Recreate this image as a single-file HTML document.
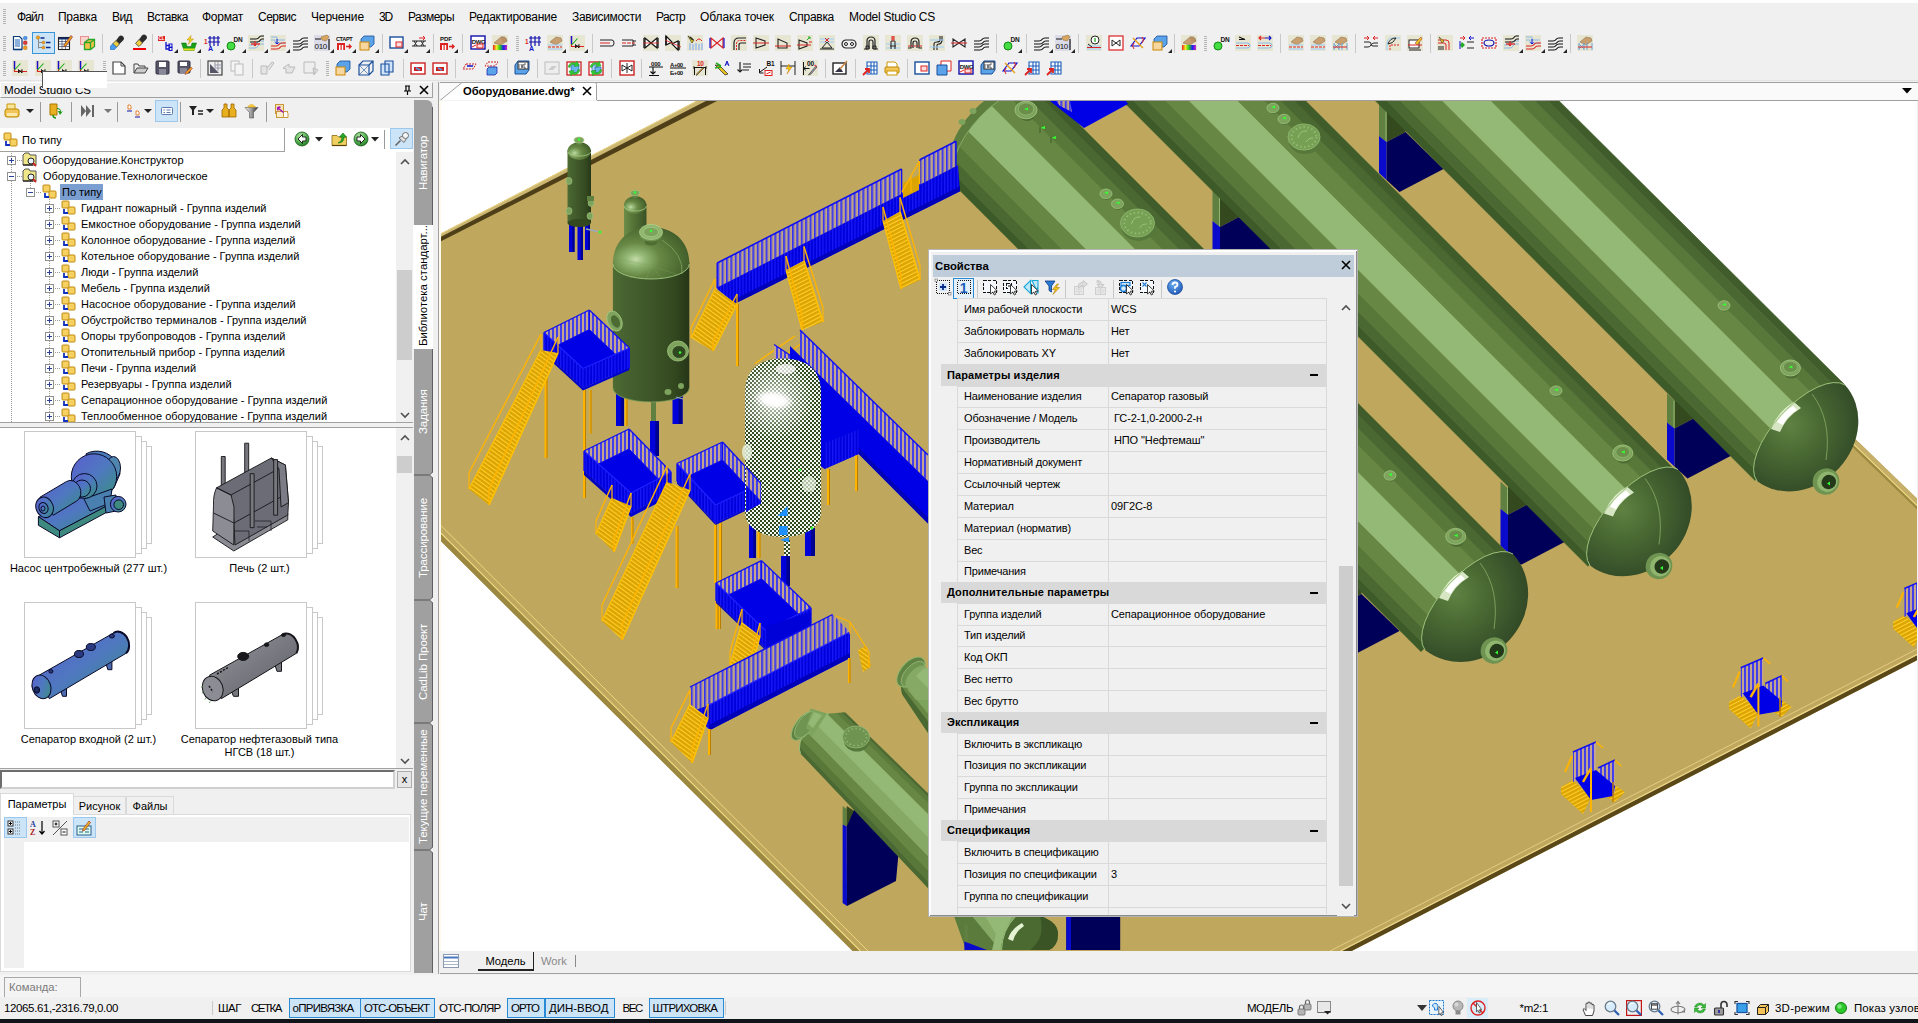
<!DOCTYPE html>
<html lang="ru"><head><meta charset="utf-8"><title>Model Studio CS</title>
<style>

*{box-sizing:border-box}
html,body{margin:0;padding:0}
body{width:1918px;height:1023px;overflow:hidden;background:#f0f0f0;position:relative;font-family:"Liberation Sans",sans-serif;font-size:11px;color:#000}
.a{position:absolute}
.ic{position:absolute;overflow:visible}
.menu span{position:absolute;top:10px;font-size:12px;white-space:nowrap;line-height:14px}
.sep{position:absolute;width:1px;background:#c8c8c8}
.grip{position:absolute;width:3px;background:repeating-linear-gradient(#f0f0f0 0 1px,#b4b4b4 1px 2px)}
.sel{position:absolute;background:#cce4f7;border:1px solid #3a94d8}
.tree div{position:absolute;white-space:nowrap;font-size:11px;line-height:16px;height:16px}
.pm{position:absolute;width:9px;height:9px;border:1px solid #919191;background:#fff}
.pm:before{content:"";position:absolute;left:1px;top:3px;width:5px;height:1px;background:#2a3e9c}
.pm.p:after{content:"";position:absolute;left:3px;top:1px;width:1px;height:5px;background:#2a3e9c}
.vt{position:absolute;left:413px;width:20px;color:#fff}
.vt span{position:absolute;left:2px;top:0;width:16px;height:100%;writing-mode:vertical-rl;transform:rotate(180deg);text-align:center;white-space:nowrap;font-size:11.5px;line-height:16px;letter-spacing:-.1px}
.vt.act{background:#fff;color:#000;width:21px}
.vt.act span{text-align:left;padding-top:3px;font-size:11.4px;letter-spacing:0}
.th{position:absolute;width:112px;height:127px;border:1px solid #c8c8c8;background:#fff}
.thl{position:absolute;font-size:11px;text-align:center;line-height:13px;white-space:nowrap}
.sb span{position:absolute;top:1001px;font-size:11.5px;line-height:14px;white-space:nowrap}
.sbon{position:absolute;top:998px;height:20px;background:#cce4f7;border:1px solid #2a8ad4}

.pp{position:absolute;left:928px;top:249px;width:430px;height:668px;background:#f0f0f0;border:1px solid #b4b4b4;box-shadow:inset 1px 1px 0 #fff,inset -1px -1px 0 #8a8a8a, inset 2px 2px 0 #fff}
.pp .t{position:absolute;left:4px;top:5px;width:421px;height:22px;background:#bfcddb}
.pp .t b{position:absolute;left:2px;top:4px;font-size:11.3px;line-height:14px}
.pr{position:absolute;left:28px;width:370px;border-top:1px solid #d9d9d9;height:23px}
.pr i{position:absolute;left:0;top:0;width:152px;height:22px;border-left:1px solid #d9d9d9;border-right:1px solid #d9d9d9;font-style:normal;padding-left:6px;line-height:22px;white-space:nowrap;overflow:hidden;font-size:11px;letter-spacing:-.17px}
.pr u{position:absolute;left:152px;top:0;width:218px;height:22px;border-right:1px solid #d9d9d9;text-decoration:none;padding-left:2px;line-height:22px;white-space:nowrap;font-size:11px;letter-spacing:-.1px}
.ph{position:absolute;left:12px;width:386px;height:22px;background:#d9d9d9;font-weight:bold;padding-left:6px;line-height:22px;font-size:11px;letter-spacing:.1px}
.ph:after{content:"";position:absolute;right:9px;top:10px;width:8px;height:2px;background:#000}

</style></head><body>
<svg width="0" height="0" style="position:absolute"><defs><linearGradient id="rb" x1="0" x2="1" y1="0" y2="0"><stop offset="0" stop-color="#e22"/><stop offset=".25" stop-color="#ee2"/><stop offset=".5" stop-color="#2c2"/><stop offset=".75" stop-color="#22e"/><stop offset="1" stop-color="#c2c"/></linearGradient></defs></svg>
<div class="a" style="left:0;top:0;width:1918px;height:3px;background:#fff"></div>
<div class="grip" style="left:3px;top:8px;height:17px"></div>
<div class="menu">
<span style="left:17px;letter-spacing:-0.879px">Файл</span>
<span style="left:58px;letter-spacing:-0.258px">Правка</span>
<span style="left:112px;letter-spacing:-0.573px">Вид</span>
<span style="left:147px;letter-spacing:-0.516px">Вставка</span>
<span style="left:202px;letter-spacing:-0.273px">Формат</span>
<span style="left:258px;letter-spacing:-0.516px">Сервис</span>
<span style="left:311px;letter-spacing:-0.127px">Черчение</span>
<span style="left:379px;letter-spacing:-1.172px">3D</span>
<span style="left:408px;letter-spacing:-0.554px">Размеры</span>
<span style="left:469px;letter-spacing:-0.244px">Редактирование</span>
<span style="left:572px;letter-spacing:-0.348px">Зависимости</span>
<span style="left:656px;letter-spacing:-0.691px">Растр</span>
<span style="left:700px;letter-spacing:-0.068px">Облака точек</span>
<span style="left:789px;letter-spacing:-0.297px">Справка</span>
<span style="left:849px;letter-spacing:-0.27px">Model Studio CS</span>
</div>
<div class="grip" style="left:3px;top:35px;height:17px"></div>
<div class="sel" style="left:32px;top:32px;width:23px;height:22px"></div>
<svg class="ic" style="left:12px;top:35px" width="16" height="16" viewBox="0 0 16 16" ><path d="M1.500 1.500h6l2.500 2.500v10.500h-8.500z" fill="#fff" stroke="#0a3a7a" stroke-width="1.200"/><path d="M3 5h5M3 7h5M3 9h5M3 11h5" stroke="#1a5fb8" stroke-width="1"/><path d="M1.500 14.500h8.500" stroke="#0a3a7a" stroke-width="1.600"/><rect x="11.500" y="1.500" width="3.500" height="3" rx="1" fill="#4a9af0" stroke="#1a5fb8" stroke-width=".5"/><rect x="11.500" y="6" width="3.500" height="3.500" rx="1" fill="#e03a3a" stroke="#a01818" stroke-width=".5"/><rect x="11.500" y="11" width="3.500" height="3.500" rx="1" fill="#f0a020" stroke="#b07010" stroke-width=".5"/><path d="M13.200 4.500v1.500M13.200 9.500v1.500" stroke="#888" stroke-dasharray="1 .5"/></svg>
<svg class="ic" style="left:35px;top:35px" width="16" height="16" viewBox="0 0 16 16" ><path d="M3.500 4v9.500M3.500 7.500h4M3.500 12.500h4" stroke="#8a8a8a" fill="none"/><circle cx="3" cy="2.500" r="1.700" fill="#f0a020" stroke="#b07010" stroke-width=".5"/><circle cx="8.500" cy="7.500" r="1.500" fill="#f0a020" stroke="#b07010" stroke-width=".5"/><circle cx="8.500" cy="12.500" r="1.500" fill="#f0a020" stroke="#b07010" stroke-width=".5"/><path d="M5.500 3h4M11 7.500h4.500M11 12.500h4.500" stroke="#0a2a8a" stroke-width="1.600"/></svg>
<svg class="ic" style="left:57px;top:35px" width="16" height="16" viewBox="0 0 16 16" ><rect x="1.500" y="2.500" width="11" height="12" fill="#fff" stroke="#222" stroke-width="1.100"/><path d="M2 3.500h10" stroke="#0a2a6a" stroke-width="2"/><path d="M2 6.500h10M2 9h10M2 11.500h10M5 4v10M8.500 4v10" stroke="#4a5a7a" stroke-width=".8"/><path d="M14 .5l1.500 1.500-6.500 9-2.200 1 .3-2.300z" fill="#f0a820" stroke="#8a2a2a" stroke-width=".7"/></svg>
<svg class="ic" style="left:79px;top:35px" width="16" height="16" viewBox="0 0 16 16" ><rect x="1.500" y="1.500" width="8" height="8" fill="#f8d4cc" stroke="#e89090"/><path d="M5.500 7.500l4-3h6v7l-4 3h-6z" fill="#f4c048" stroke="#28a828" stroke-width="1.300"/><path d="M5.500 7.500h6v7M11.500 7.500l4-3" stroke="#28a828" fill="none" stroke-width="1.300"/></svg>
<div class="sep" style="left:102px;top:34px;height:19px"></div>
<svg class="ic" style="left:109px;top:35px" width="16" height="16" viewBox="0 0 16 16" ><path d="M10 1.500q2-2 4 0t0 4l-3.500 3.500-3.500-3.500z" fill="#2a2a2a"/><path d="M7 5.500l3.500 3.500-3 3.200-3.700-3.400z" fill="#f0d040" stroke="#2a2a2a" stroke-width=".7"/><path d="M3.800 8.800l3.700 3.400-2 2.300H1.500v-3.500z" fill="#4aa0f0" stroke="#1a5fb8" stroke-width=".6"/></svg>
<svg class="ic" style="left:132px;top:35px" width="16" height="16" viewBox="0 0 16 16" ><path d="M10 .5q2-2 4 0t0 4l-3.500 3.500-3.500-3.500z" fill="#2a2a2a"/><path d="M7 4.500l3.500 3.500-3.500 3.500-3.500-3z" fill="#f0d040" stroke="#2a2a2a" stroke-width=".7"/><path d="M1 14h13" stroke="#e00" stroke-width="2"/></svg>
<div class="sep" style="left:152px;top:34px;height:19px"></div>
<svg class="ic" style="left:157px;top:35px" width="16" height="16" viewBox="0 0 16 16" ><rect x="1" y="1" width="7" height="5" fill="#d22"/><text x="1.6" y="5.2" font-size="4.5" font-family="Liberation Sans,sans-serif" font-weight="bold" fill="#fff" letter-spacing="0">CL</text><path d="M9 7v7h4M9 10.500h4" stroke="#11c" fill="none" stroke-width="1.300"/><rect x="12" y="9" width="3" height="3" fill="none" stroke="#11c"/><rect x="12" y="12.500" width="3" height="3" fill="none" stroke="#11c"/></svg>
<svg class="ic" style="left:181px;top:35px" width="16" height="16" viewBox="0 0 16 16" ><path d="M.5 8h4.500l1 3.500h4l1-3.500h4.500l-2.500 7.500h-10z" fill="#18a018" stroke="#0a6a0a" stroke-width=".5"/><path d="M2 13.500h12l-.7 2H2.700z" fill="#e8e020"/><path d="M10 .5L6 5h3L7 9.500l5.500-5.500h-3z" fill="#f8d820" stroke="#b08000" stroke-width=".5"/></svg>
<svg class="ic" style="left:204px;top:35px" width="16" height="16" viewBox="0 0 16 16" ><path d="M6 1v10M10 1v10M14 1v10M4 3h12M4 7h12" stroke="#11a" fill="none" stroke-width="1.200"/><text x="0" y="9" font-size="6.5" font-family="Liberation Sans,sans-serif" font-weight="bold" fill="#d22" letter-spacing="0">1</text><text x="4" y="16" font-size="7" font-family="Liberation Sans,sans-serif" font-weight="bold" fill="#11c" letter-spacing="0">A</text></svg>
<svg class="ic" style="left:226px;top:35px" width="16" height="16" viewBox="0 0 16 16" ><circle cx="5" cy="11" r="4" fill="#4d4" stroke="#181"/><text x="7.5" y="6.5" font-size="6.5" font-family="Liberation Sans,sans-serif" font-weight="bold" fill="#111" letter-spacing="-0.3">DN</text></svg>
<svg class="ic" style="left:248px;top:35px" width="16" height="16" viewBox="0 0 16 16" ><rect width="16" height="16" fill="#e6e6d2"/><path d="M1 10h5q2 0 3-2t3-2h4M1 13h6q2 0 3-2t3-2h3" stroke="#8ab8e8" fill="none"/><path d="M2 4h6q2 0 3-1.500T13 1h3M2 7h7q2 0 3-1.500T14 4h2" stroke="#111" fill="none" stroke-width="1.200"/><path d="M3 9h9" stroke="#d22" stroke-width="1.300"/><path d="M7 6v5M5.500 9.500L7 11l1.500-1.500" stroke="#d22" fill="none"/></svg>
<svg class="ic" style="left:270px;top:35px" width="16" height="16" viewBox="0 0 16 16" ><rect width="16" height="16" fill="#e6e6d2"/><path d="M1 2h6v3h8M1 5h4v3h10" stroke="#8ab8e8" fill="none"/><path d="M1 11h5q2 0 3-1.500T12 8h4M1 14h6q2 0 3-1.500T13 11h3" stroke="#d22" fill="none" stroke-width="1.200"/><path d="M7 4v5M5.500 7.500L7 9l1.500-1.500" stroke="#11c" fill="none"/></svg>
<svg class="ic" style="left:292px;top:35px" width="16" height="16" viewBox="0 0 16 16" ><path d="M1 6h5q2 0 3-1.500T12 3h4M1 9h6q2 0 3-1.500T13 6h3M1 12h5q2 0 3-1.500T12 9h4M1 15h6q2 0 3-1.500T13 12h3" stroke="#111" fill="none" stroke-width="1.200"/></svg>
<svg class="ic" style="left:314px;top:35px" width="16" height="16" viewBox="0 0 16 16" ><rect width="16" height="16" fill="#dcdce8"/><text x="0.5" y="14" font-size="8" font-family="Liberation Sans,sans-serif" font-weight="normal" fill="#111" letter-spacing="-0.3">010</text><path d="M15 4v11" stroke="#111" stroke-width="1.200"/><path d="M1 4h6" stroke="#111"/><path d="M7 2l6-2 2 2-3 4-4-1z" fill="#d9a760" stroke="#863" stroke-width=".5"/></svg>
<svg class="ic" style="left:336px;top:35px" width="16" height="16" viewBox="0 0 16 16" ><text x="0" y="6" font-size="5.6" font-family="Liberation Sans,sans-serif" font-weight="bold" fill="#111" letter-spacing="-0.35">СТАРТ</text><path d="M1 8h8v7H1z" fill="#d22"/><path d="M3 10h1.500v5H3zM5.700 10h1.500v5H5.700z" fill="#fff"/><path d="M10 11.500h5M13 9.500l2 2-2 2" stroke="#d22" fill="none" stroke-width="1.400"/></svg>
<svg class="ic" style="left:359px;top:35px" width="16" height="16" viewBox="0 0 16 16" ><path d="M5 1h10v8l-3 3H2V4z" fill="#5aa3e8" stroke="#1a4f9c" stroke-width=".8"/><rect x="1" y="7" width="9" height="8" fill="#f6d7a0" stroke="#c80"/></svg>
<div class="sep" style="left:382px;top:34px;height:19px"></div>
<svg class="ic" style="left:389px;top:35px" width="16" height="16" viewBox="0 0 16 16" ><rect x="1" y="2" width="13" height="11" fill="#fff" stroke="#1a4f9c" stroke-width="1.4"/><rect x="7" y="7" width="6" height="5" fill="#fdd" stroke="#d22"/></svg>
<svg class="ic" style="left:411px;top:35px" width="16" height="16" viewBox="0 0 16 16" ><path d="M1 6h14M1 11h14" stroke="#222" /><path d="M3 6l3 5M6 6l-3 5M10 6l3 5M13 6l-3 5" stroke="#222" fill="none"/><path d="M8 3h6M12 1l2 2-2 2" stroke="#d22" fill="none"/></svg>
<div class="sep" style="left:433px;top:34px;height:19px"></div>
<svg class="ic" style="left:439px;top:35px" width="16" height="16" viewBox="0 0 16 16" ><text x="1" y="6" font-size="6" font-family="Liberation Sans,sans-serif" font-weight="bold" fill="#111" letter-spacing="0">PDF</text><path d="M1 8h8v7H1z" fill="#d22"/><path d="M3 10h1.500v5H3zM5.700 10h1.500v5H5.700z" fill="#fff"/><path d="M10 11.500h5M13 9.500l2 2-2 2" stroke="#d22" fill="none" stroke-width="1.400"/></svg>
<div class="sep" style="left:462px;top:34px;height:19px"></div>
<svg class="ic" style="left:470px;top:35px" width="16" height="16" viewBox="0 0 16 16" ><rect x="1" y="1" width="14" height="13" fill="#fff" stroke="#11a" stroke-width="1.400"/><text x="1.8" y="8.5" font-size="6" font-family="Liberation Sans,sans-serif" font-weight="bold" fill="#111" letter-spacing="-0.4">DWG</text><rect x="7" y="9" width="6" height="4" fill="#fdd" stroke="#d22"/><path d="M2 12l4-2" stroke="#d22"/></svg>
<svg class="ic" style="left:492px;top:35px" width="16" height="16" viewBox="0 0 16 16" ><rect width="16" height="16" fill="#e6e6d2"/><path d="M2 8l7-6 5 1 1 3-6 4z" fill="#c8a070" stroke="#864" stroke-width=".5"/><path d="M9 2l4 0M9 4l5 0M10 6l5 0" stroke="#a07850" stroke-width=".7"/><rect x="1" y="10" width="14" height="5" fill="url(#rb)"/></svg>
<div class="grip" style="left:516px;top:35px;height:17px"></div>
<svg class="ic" style="left:525px;top:35px" width="16" height="16" viewBox="0 0 16 16" ><path d="M6 1v10M10 1v10M14 1v10M4 3h12M4 7h12" stroke="#11a" fill="none" stroke-width="1.200"/><text x="0" y="9" font-size="6.5" font-family="Liberation Sans,sans-serif" font-weight="bold" fill="#d22" letter-spacing="0">1</text><text x="4" y="16" font-size="7" font-family="Liberation Sans,sans-serif" font-weight="bold" fill="#11c" letter-spacing="0">A</text></svg>
<svg class="ic" style="left:547px;top:35px" width="16" height="16" viewBox="0 0 16 16" ><rect width="16" height="16" fill="#e6e6d2"/><path d="M3 7l6-5 5 1 1 3-6 4z" fill="#c8a070" stroke="#864" stroke-width=".5"/><path d="M1 10h14M1 14h14" stroke="#9cf"/><path d="M1 12h14" stroke="#d22" stroke-dasharray="3 1"/></svg>
<svg class="ic" style="left:569px;top:35px" width="16" height="16" viewBox="0 0 16 16" ><rect width="16" height="16" fill="#e6e6d2"/><path d="M2.500 1v10.500H15" stroke="#d22" fill="none" stroke-width="1.200"/><path d="M2.500 1v8" stroke="#11c" stroke-width="1.400"/><path d="M2.500 10l6-6.500" stroke="#1a1" stroke-width="1.100"/><path d="M6.500 9.500l3.500 3.500M10 9.500l-3.500 3.500M6.500 9.500v3.500M10 9.500v3.500" stroke="#111" fill="none" stroke-width=".9"/></svg>
<div class="sep" style="left:592px;top:34px;height:19px"></div>
<svg class="ic" style="left:599px;top:35px" width="16" height="16" viewBox="0 0 16 16" ><path d="M1 5h12q2 0 2 3t-2 3H1" stroke="#222" fill="none"/><path d="M1 8h10" stroke="#d22"/></svg>
<svg class="ic" style="left:621px;top:35px" width="16" height="16" viewBox="0 0 16 16" ><path d="M1 5h11v6H1M12 6h3M12 10h3" stroke="#222" fill="none"/><path d="M1 8h13" stroke="#d22" stroke-dasharray="4 1"/></svg>
<svg class="ic" style="left:643px;top:35px" width="16" height="16" viewBox="0 0 16 16" ><rect width="16" height="16" fill="#e6e6d2"/><path d="M2 3v10l6-5zM14 3v10L8 8z" fill="#fff" stroke="#111" stroke-width="1.200"/><path d="M1 3v10M15 3v10" stroke="#111" stroke-width="1.200"/><path d="M0 8h16" stroke="#d22" stroke-width=".8"/></svg>
<svg class="ic" style="left:665px;top:35px" width="16" height="16" viewBox="0 0 16 16" ><rect width="16" height="16" fill="#e6e6d2"/><path d="M1 1v9l6-3zM13 6v9L7 9z" fill="#fff" stroke="#111" stroke-width="1.200"/><path d="M14 6v9M1 1v9" stroke="#111" stroke-width="1.400"/><path d="M0 5l16 7" stroke="#d22" stroke-width=".8"/></svg>
<svg class="ic" style="left:687px;top:35px" width="16" height="16" viewBox="0 0 16 16" ><rect width="16" height="16" fill="#e6e6d2"/><path d="M3 8v7M6 9v6M9 8v7M12 9v6M15 8v7" stroke="#8ab0f0" stroke-width="1.200"/><path d="M1 1l6 4-2 3z" fill="#e8d020" stroke="#222" stroke-width=".6"/><path d="M3 2l3 3" stroke="#222" stroke-width="1.500"/><path d="M9 6q3-4 6 0" stroke="#d22" fill="none"/></svg>
<svg class="ic" style="left:709px;top:35px" width="16" height="16" viewBox="0 0 16 16" ><path d="M2 3v10l6-5zM14 3v10L8 8z" fill="none" stroke="#d22" stroke-width="1.2"/><path d="M1 3v10M15 3v10" stroke="#11c" stroke-width="1.2"/></svg>
<svg class="ic" style="left:731px;top:35px" width="16" height="16" viewBox="0 0 16 16" ><rect width="16" height="16" fill="#e6e6d2"/><path d="M3 15V8q0-5 5-5h7M8 15V10q0-2 2-2h5" stroke="#222" fill="none" stroke-width="1.2"/><path d="M5.500 15V9q0-3.500 3.500-3.500h6" stroke="#d22" fill="none" stroke-dasharray="2 1"/></svg>
<svg class="ic" style="left:753px;top:35px" width="16" height="16" viewBox="0 0 16 16" ><rect width="16" height="16" fill="#e6e6d2"/><path d="M3 3v10l9-3V6z" fill="none" stroke="#222" stroke-width="1.1"/><path d="M0 8h16" stroke="#d22"/></svg>
<svg class="ic" style="left:775px;top:35px" width="16" height="16" viewBox="0 0 16 16" ><rect width="16" height="16" fill="#e6e6d2"/><path d="M3 4v9h9V8z" fill="none" stroke="#222" stroke-width="1.1"/><path d="M0 11h16" stroke="#d22"/></svg>
<svg class="ic" style="left:797px;top:35px" width="16" height="16" viewBox="0 0 16 16" ><rect width="16" height="16" fill="#e6e6d2"/><path d="M2 5v9l8-3V8z" fill="none" stroke="#222" stroke-width="1.1"/><path d="M0 10h14" stroke="#d22"/><path d="M10 5l3-3M11 2h2v2" stroke="#2a2" fill="none"/><path d="M12 7h3" stroke="#d22"/></svg>
<svg class="ic" style="left:819px;top:35px" width="16" height="16" viewBox="0 0 16 16" ><rect width="16" height="16" fill="#e6e6d2"/><path d="M1 4h14M1 7h14" stroke="#9cf"/><path d="M8 7l-5 6h10zM1 14h14" stroke="#222" fill="none"/><path d="M6 3l4 4M10 3L6 7" stroke="#d22"/></svg>
<svg class="ic" style="left:841px;top:35px" width="16" height="16" viewBox="0 0 16 16" ><rect x="1" y="5" width="14" height="8" rx="4" fill="none" stroke="#222" stroke-width="1.2"/><circle cx="5" cy="9" r="1.500" fill="none" stroke="#222"/><circle cx="11" cy="9" r="1.500" fill="none" stroke="#222"/></svg>
<svg class="ic" style="left:863px;top:35px" width="16" height="16" viewBox="0 0 16 16" ><rect width="16" height="16" fill="#e6e6d2"/><path d="M1 14h3V6q0-4 4-4t4 4v8h3M6 14V7q0-2 2-2t2 2v7" stroke="#222" fill="none" stroke-width="1.2"/><path d="M3 11h3v3H3zM10 11h3v3h-3z" fill="none" stroke="#222"/></svg>
<svg class="ic" style="left:885px;top:35px" width="16" height="16" viewBox="0 0 16 16" ><rect width="16" height="16" fill="#e6e6d2"/><path d="M1 9h14M1 13h14" stroke="#9cf"/><path d="M6 14V6h4v8M5 11h6" stroke="#222" fill="none"/><path d="M6 2h4M8 1v5M6 4h4" stroke="#d22"/></svg>
<svg class="ic" style="left:907px;top:35px" width="16" height="16" viewBox="0 0 16 16" ><rect width="16" height="16" fill="#e6e6d2"/><path d="M1 13h3V7q0-4 4-4t4 4v6h3M6 13V8q0-2 2-2t2 2v5" stroke="#222" fill="none" stroke-width="1.2"/><path d="M1 11h14" stroke="#d22" stroke-dasharray="2 1"/></svg>
<svg class="ic" style="left:929px;top:35px" width="16" height="16" viewBox="0 0 16 16" ><rect width="16" height="16" fill="#e6e6d2"/><path d="M5 15V9q0-2 3-2t3-2V1M8 15V10q0-1 2-1t3-3V1" stroke="#222" fill="none" stroke-width="1.1"/><path d="M1 5h14M1 12h14" stroke="#9cf"/></svg>
<svg class="ic" style="left:951px;top:35px" width="16" height="16" viewBox="0 0 16 16" ><path d="M2 4v8l6-4zM14 4v8L8 8z" fill="none" stroke="#222" stroke-width="1.1"/><path d="M0 8h16" stroke="#d22"/></svg>
<svg class="ic" style="left:973px;top:35px" width="16" height="16" viewBox="0 0 16 16" ><path d="M1 6h5q2 0 3-1.500T12 3h4M1 9h6q2 0 3-1.500T13 6h3M1 12h5q2 0 3-1.500T12 9h4M1 15h6q2 0 3-1.500T13 12h3" stroke="#111" fill="none" stroke-width="1.200"/></svg>
<div class="sep" style="left:996px;top:34px;height:19px"></div>
<svg class="ic" style="left:1003px;top:35px" width="16" height="16" viewBox="0 0 16 16" ><circle cx="5" cy="11" r="4" fill="#4d4" stroke="#181"/><text x="7.5" y="6.5" font-size="6.5" font-family="Liberation Sans,sans-serif" font-weight="bold" fill="#111" letter-spacing="-0.3">DN</text></svg>
<div class="sep" style="left:1026px;top:34px;height:19px"></div>
<svg class="ic" style="left:1033px;top:35px" width="16" height="16" viewBox="0 0 16 16" ><path d="M1 6h5q2 0 3-1.500T12 3h4M1 9h6q2 0 3-1.500T13 6h3M1 12h5q2 0 3-1.500T12 9h4M1 15h6q2 0 3-1.500T13 12h3" stroke="#111" fill="none" stroke-width="1.200"/></svg>
<svg class="ic" style="left:1055px;top:35px" width="16" height="16" viewBox="0 0 16 16" ><rect width="16" height="16" fill="#dcdce8"/><text x="0.5" y="14" font-size="8" font-family="Liberation Sans,sans-serif" font-weight="normal" fill="#111" letter-spacing="-0.3">010</text><path d="M15 4v11" stroke="#111" stroke-width="1.200"/><path d="M1 4h6" stroke="#111"/><path d="M7 2l6-2 2 2-3 4-4-1z" fill="#d9a760" stroke="#863" stroke-width=".5"/></svg>
<div class="sep" style="left:1078px;top:34px;height:19px"></div>
<svg class="ic" style="left:1086px;top:35px" width="16" height="16" viewBox="0 0 16 16" ><rect width="16" height="16" fill="#e6e6d2"/><circle cx="9" cy="5" r="4" fill="#fff" stroke="#222"/><path d="M9 3v4" stroke="#2a2" stroke-width="1.3"/><path d="M1 11h14M1 14h14" stroke="#9cf"/><path d="M2 9l4 3" stroke="#222"/><path d="M1 12.500h14" stroke="#d22"/></svg>
<svg class="ic" style="left:1108px;top:35px" width="16" height="16" viewBox="0 0 16 16" ><rect x="1" y="1" width="14" height="14" fill="#fff" stroke="#d22" stroke-width="1.2"/><path d="M4 5v6l4-3zM12 5v6L8 8z" fill="none" stroke="#222"/></svg>
<svg class="ic" style="left:1130px;top:35px" width="16" height="16" viewBox="0 0 16 16" ><path d="M1 11l6-8h8l-6 8z" fill="none" stroke="#11c" stroke-width="1.2"/><path d="M3 3l10 10" stroke="#e8a020" stroke-width="1.5"/><path d="M12 2q3 3 0 6M4 14q-3-3 0-6" stroke="#d22" fill="none"/></svg>
<svg class="ic" style="left:1152px;top:35px" width="16" height="16" viewBox="0 0 16 16" ><path d="M5 1h10v8l-3 3H2V4z" fill="#5aa3e8" stroke="#1a4f9c" stroke-width=".8"/><rect x="1" y="7" width="9" height="8" fill="#f6d7a0" stroke="#c80"/></svg>
<div class="sep" style="left:1174px;top:34px;height:19px"></div>
<svg class="ic" style="left:1181px;top:35px" width="16" height="16" viewBox="0 0 16 16" ><rect width="16" height="16" fill="#e6e6d2"/><path d="M2 8l7-6 5 1 1 3-6 4z" fill="#c8a070" stroke="#864" stroke-width=".5"/><path d="M9 2l4 0M9 4l5 0M10 6l5 0" stroke="#a07850" stroke-width=".7"/><rect x="1" y="10" width="14" height="5" fill="url(#rb)"/></svg>
<div class="grip" style="left:1204px;top:35px;height:17px"></div>
<svg class="ic" style="left:1213px;top:35px" width="16" height="16" viewBox="0 0 16 16" ><circle cx="5" cy="11" r="4" fill="#4d4" stroke="#181"/><text x="7.5" y="6.5" font-size="6.5" font-family="Liberation Sans,sans-serif" font-weight="bold" fill="#111" letter-spacing="-0.3">DN</text></svg>
<svg class="ic" style="left:1235px;top:35px" width="16" height="16" viewBox="0 0 16 16" ><rect width="16" height="16" fill="#e6e6d2"/><path d="M4 2l6 2.500-6 0" stroke="#111" fill="none" stroke-width="1.100"/><path d="M1 8h11q3 0 3 2.500T12 13H1" stroke="#8ab8e8" fill="none"/><path d="M1 10.500h13" stroke="#d22" stroke-dasharray="3 1"/></svg>
<svg class="ic" style="left:1257px;top:35px" width="16" height="16" viewBox="0 0 16 16" ><rect width="16" height="16" fill="#e6e6d2"/><path d="M8 3H2M4 1L2 3l2 2" stroke="#d22" fill="none" stroke-width="1.100"/><path d="M8 3h6M12 1l2 2-2 2" stroke="#11c" fill="none" stroke-width="1.100"/><path d="M1 8h11q3 0 3 2.500T12 13H1" stroke="#8ab8e8" fill="none"/><path d="M1 10.500h13" stroke="#d22" stroke-dasharray="3 1"/></svg>
<div class="sep" style="left:1280px;top:34px;height:19px"></div>
<svg class="ic" style="left:1288px;top:35px" width="16" height="16" viewBox="0 0 16 16" ><rect width="16" height="16" fill="#e6e6d2"/><path d="M3 7l6-5 5 1 1 3-6 4z" fill="#c8a070" stroke="#864" stroke-width=".5"/><path d="M1 10h14M1 14h14" stroke="#9cf"/><path d="M1 12h14" stroke="#d22" stroke-dasharray="3 1"/></svg>
<svg class="ic" style="left:1310px;top:35px" width="16" height="16" viewBox="0 0 16 16" ><rect width="16" height="16" fill="#e6e6d2"/><path d="M3 7l6-5 5 1 1 3-6 4z" fill="#c8a070" stroke="#864" stroke-width=".5"/><path d="M1 10h14M1 14h14" stroke="#9cf"/><path d="M1 12h14" stroke="#d22" stroke-dasharray="3 1"/></svg>
<svg class="ic" style="left:1332px;top:35px" width="16" height="16" viewBox="0 0 16 16" ><rect width="16" height="16" fill="#e6e6d2"/><path d="M3 7l6-5 5 1 1 3-6 4z" fill="#c8a070" stroke="#864" stroke-width=".5"/><path d="M2 8v7M7 8v7M2 9l5 5M7 9l-5 5M10 8v7M15 8v7" stroke="#6ad" fill="none"/><path d="M1 12h14" stroke="#d22"/></svg>
<div class="sep" style="left:1355px;top:34px;height:19px"></div>
<svg class="ic" style="left:1363px;top:35px" width="16" height="16" viewBox="0 0 16 16" ><path d="M1 3h5M4 1l2 2-2 2M15 3h-5M12 1l-2 2 2 2" stroke="#d22" fill="none"/><path d="M1 7h5q2 0 2 2t2 2h5M1 12h4q2 0 3-2t3-2h4" stroke="#222" fill="none"/></svg>
<svg class="ic" style="left:1385px;top:35px" width="16" height="16" viewBox="0 0 16 16" ><rect width="16" height="16" fill="#e6e6d2"/><path d="M2 15V9q0-6 6-6h7" stroke="#9cf" fill="none"/><path d="M3 9q2-6 8-6M3 9q5 0 8-6" stroke="#222" fill="none"/><path d="M5 15V10h10" stroke="#d22" fill="none" stroke-dasharray="2 1"/></svg>
<svg class="ic" style="left:1407px;top:35px" width="16" height="16" viewBox="0 0 16 16" ><rect width="16" height="16" fill="#e6e6d2"/><rect x="2" y="5" width="10" height="8" fill="#fff" stroke="#222"/><path d="M1 10h14" stroke="#d22"/><path d="M8 8l6-6 1 2-5 6z" fill="#e8c020" stroke="#a33" stroke-width=".5"/><path d="M2 15h12" stroke="#222"/></svg>
<div class="sep" style="left:1430px;top:34px;height:19px"></div>
<svg class="ic" style="left:1437px;top:35px" width="16" height="16" viewBox="0 0 16 16" ><rect width="16" height="16" fill="#e6e6d2"/><path d="M1 5h8q3 0 3 3v7M1 8h6q2 0 2 2v5" stroke="#d22" fill="none"/><path d="M2 2l5 4-2 2z" fill="#e8c020" stroke="#222" stroke-width=".5"/><path d="M1 12h6M1 14h6" stroke="#222"/></svg>
<svg class="ic" style="left:1459px;top:35px" width="16" height="16" viewBox="0 0 16 16" ><path d="M1 3h5M4 1l2 2-2 2" stroke="#d22" fill="none"/><path d="M15 3h-5M12 1l-2 2 2 2" stroke="#11c" fill="none"/><path d="M8 7h7M8 13h7" stroke="#222"/><path d="M3 7l3 3-3 3-2-3z" fill="#2a2"/><path d="M1 6v8" stroke="#11c"/></svg>
<svg class="ic" style="left:1481px;top:35px" width="16" height="16" viewBox="0 0 16 16" ><rect x="1" y="3" width="14" height="10" fill="none" stroke="#d22" stroke-dasharray="2 1" stroke-width="1.2"/><ellipse cx="8" cy="8" rx="5" ry="3" fill="none" stroke="#11a" stroke-width="1.2"/></svg>
<svg class="ic" style="left:1503px;top:35px" width="16" height="16" viewBox="0 0 16 16" ><rect width="16" height="16" fill="#e6e6d2"/><path d="M1 10h5q2 0 3-2t3-2h4M1 13h6q2 0 3-2t3-2h3" stroke="#8ab8e8" fill="none"/><path d="M2 4h6q2 0 3-1.500T13 1h3M2 7h7q2 0 3-1.500T14 4h2" stroke="#111" fill="none" stroke-width="1.200"/><path d="M3 9h9" stroke="#d22" stroke-width="1.300"/><path d="M7 6v5M5.500 9.500L7 11l1.500-1.500" stroke="#d22" fill="none"/></svg>
<svg class="ic" style="left:1525px;top:35px" width="16" height="16" viewBox="0 0 16 16" ><rect width="16" height="16" fill="#e6e6d2"/><path d="M1 2h6v3h8M1 5h4v3h10" stroke="#8ab8e8" fill="none"/><path d="M1 11h5q2 0 3-1.500T12 8h4M1 14h6q2 0 3-1.500T13 11h3" stroke="#d22" fill="none" stroke-width="1.200"/><path d="M7 4v5M5.500 7.500L7 9l1.500-1.500" stroke="#11c" fill="none"/></svg>
<svg class="ic" style="left:1547px;top:35px" width="16" height="16" viewBox="0 0 16 16" ><path d="M1 6h5q2 0 3-1.500T12 3h4M1 9h6q2 0 3-1.500T13 6h3M1 12h5q2 0 3-1.500T12 9h4M1 15h6q2 0 3-1.500T13 12h3" stroke="#111" fill="none" stroke-width="1.200"/></svg>
<div class="sep" style="left:1570px;top:34px;height:19px"></div>
<svg class="ic" style="left:1577px;top:35px" width="16" height="16" viewBox="0 0 16 16" ><rect width="16" height="16" fill="#e6e6d2"/><path d="M3 7l6-5 5 1 1 3-6 4z" fill="#c8a070" stroke="#864" stroke-width=".5"/><path d="M2 8v7M7 8v7M2 9l5 5M7 9l-5 5M10 8v7M15 8v7" stroke="#6ad" fill="none"/><path d="M1 12h14" stroke="#d22"/></svg>
<svg class="ic" style="left:174px;top:49px" width="4" height="4"><path d="M4 0v4H0z" fill="#222"/></svg>
<svg class="ic" style="left:197px;top:49px" width="4" height="4"><path d="M4 0v4H0z" fill="#222"/></svg>
<svg class="ic" style="left:220px;top:49px" width="4" height="4"><path d="M4 0v4H0z" fill="#222"/></svg>
<svg class="ic" style="left:242px;top:49px" width="4" height="4"><path d="M4 0v4H0z" fill="#222"/></svg>
<svg class="ic" style="left:264px;top:49px" width="4" height="4"><path d="M4 0v4H0z" fill="#222"/></svg>
<svg class="ic" style="left:286px;top:49px" width="4" height="4"><path d="M4 0v4H0z" fill="#222"/></svg>
<svg class="ic" style="left:330px;top:49px" width="4" height="4"><path d="M4 0v4H0z" fill="#222"/></svg>
<svg class="ic" style="left:352px;top:49px" width="4" height="4"><path d="M4 0v4H0z" fill="#222"/></svg>
<svg class="ic" style="left:375px;top:49px" width="4" height="4"><path d="M4 0v4H0z" fill="#222"/></svg>
<svg class="ic" style="left:404px;top:49px" width="4" height="4"><path d="M4 0v4H0z" fill="#222"/></svg>
<svg class="ic" style="left:426px;top:49px" width="4" height="4"><path d="M4 0v4H0z" fill="#222"/></svg>
<svg class="ic" style="left:454px;top:49px" width="4" height="4"><path d="M4 0v4H0z" fill="#222"/></svg>
<svg class="ic" style="left:485px;top:49px" width="4" height="4"><path d="M4 0v4H0z" fill="#222"/></svg>
<svg class="ic" style="left:562px;top:49px" width="4" height="4"><path d="M4 0v4H0z" fill="#222"/></svg>
<svg class="ic" style="left:584px;top:49px" width="4" height="4"><path d="M4 0v4H0z" fill="#222"/></svg>
<svg class="ic" style="left:1018px;top:49px" width="4" height="4"><path d="M4 0v4H0z" fill="#222"/></svg>
<svg class="ic" style="left:1049px;top:49px" width="4" height="4"><path d="M4 0v4H0z" fill="#222"/></svg>
<svg class="ic" style="left:1071px;top:49px" width="4" height="4"><path d="M4 0v4H0z" fill="#222"/></svg>
<svg class="ic" style="left:1168px;top:49px" width="4" height="4"><path d="M4 0v4H0z" fill="#222"/></svg>
<svg class="ic" style="left:1519px;top:49px" width="4" height="4"><path d="M4 0v4H0z" fill="#222"/></svg>
<svg class="ic" style="left:1541px;top:49px" width="4" height="4"><path d="M4 0v4H0z" fill="#222"/></svg>
<svg class="ic" style="left:1563px;top:49px" width="4" height="4"><path d="M4 0v4H0z" fill="#222"/></svg>
<div class="grip" style="left:3px;top:60px;height:17px"></div>
<div class="grip" style="left:103px;top:60px;height:17px"></div>
<svg class="ic" style="left:12px;top:60px" width="16" height="16" viewBox="0 0 16 16" ><rect width="16" height="16" fill="#e6e6d2"/><path d="M2.500 1v10.500H15" stroke="#d22" fill="none" stroke-width="1.200"/><path d="M2.500 1v8" stroke="#11c" stroke-width="1.400"/><path d="M2.500 10l6-6.500" stroke="#1a1" stroke-width="1.100"/><path d="M6.500 9.500l3.500 3.500M10 9.500l-3.500 3.500M6.500 9.500v3.500M10 9.500v3.500" stroke="#111" fill="none" stroke-width=".9"/></svg>
<svg class="ic" style="left:35px;top:60px" width="16" height="16" viewBox="0 0 16 16" ><rect width="16" height="16" fill="#e6e6d2"/><path d="M2.500 1v10.500H15" stroke="#d22" fill="none" stroke-width="1.200"/><path d="M2.500 1v8" stroke="#11c" stroke-width="1.400"/><path d="M2.500 10l6-6.500" stroke="#1a1" stroke-width="1.100"/><path d="M6.500 9.500l3.500 3.500M10 9.500l-3.500 3.500M6.500 9.500v3.500M10 9.500v3.500" stroke="#111" fill="none" stroke-width=".9"/></svg>
<svg class="ic" style="left:56px;top:60px" width="16" height="16" viewBox="0 0 16 16" ><rect width="16" height="16" fill="#e6e6d2"/><path d="M2.500 1v10.500H15" stroke="#d22" fill="none" stroke-width="1.200"/><path d="M2.500 1v8" stroke="#11c" stroke-width="1.400"/><path d="M2.500 10l6-6.500" stroke="#1a1" stroke-width="1.100"/><path d="M6.500 9.500l3.500 3.500M10 9.500l-3.500 3.500M6.500 9.500v3.500M10 9.500v3.500" stroke="#111" fill="none" stroke-width=".9"/></svg>
<svg class="ic" style="left:78px;top:60px" width="16" height="16" viewBox="0 0 16 16" ><rect width="16" height="16" fill="#e6e6d2"/><path d="M2.500 1v10.500H15" stroke="#d22" fill="none" stroke-width="1.200"/><path d="M2.500 1v8" stroke="#11c" stroke-width="1.400"/><path d="M2.500 10l6-6.500" stroke="#1a1" stroke-width="1.100"/><path d="M6.500 9.500l3.500 3.500M10 9.500l-3.500 3.500M6.500 9.500v3.500M10 9.500v3.500" stroke="#111" fill="none" stroke-width=".9"/></svg>
<svg class="ic" style="left:111px;top:60px" width="16" height="16" viewBox="0 0 16 16" ><path d="M2 2h8l4 4v8H2z" fill="#fff" stroke="#444" stroke-width="1.2"/><path d="M10 2v4h4" fill="none" stroke="#444"/></svg>
<svg class="ic" style="left:133px;top:60px" width="16" height="16" viewBox="0 0 16 16" ><path d="M1 13V4h4l1 2h6v2" fill="#eee" stroke="#444"/><path d="M1 13l3-5h11l-3 5z" fill="#ccc" stroke="#444"/></svg>
<svg class="ic" style="left:155px;top:60px" width="16" height="16" viewBox="0 0 16 16" ><rect x="1" y="1" width="13" height="13" rx="1" fill="#556" stroke="#334"/><rect x="4" y="2" width="7" height="5" fill="#fff"/><rect x="4" y="9" width="7" height="5" fill="#889"/></svg>
<svg class="ic" style="left:177px;top:60px" width="16" height="16" viewBox="0 0 16 16" ><rect x="1" y="1" width="12" height="12" rx="1" fill="#556" stroke="#334"/><rect x="3" y="2" width="7" height="4" fill="#fff"/><rect x="3" y="8" width="7" height="5" fill="#889"/><path d="M14 7l1.500 1.500-5 5-2.500 1 1-2.500z" fill="#e8a020" stroke="#a33" stroke-width=".5"/></svg>
<div class="sep" style="left:200px;top:59px;height:19px"></div>
<svg class="ic" style="left:207px;top:60px" width="16" height="16" viewBox="0 0 16 16" ><rect x="1" y="1" width="14" height="14" fill="#eee" stroke="#444" stroke-width="1.2"/><path d="M3 13V4l9 9z" fill="#556"/><path d="M8 2v6h6M11 2v9M8 5h6" stroke="#99a" fill="none"/></svg>
<svg class="ic" style="left:229px;top:60px" width="16" height="16" viewBox="0 0 16 16" ><rect x="2" y="1" width="8" height="10" fill="#f4f4f4" stroke="#bbb"/><rect x="6" y="4" width="8" height="11" fill="#f4f4f4" stroke="#bbb"/></svg>
<div class="sep" style="left:252px;top:59px;height:19px"></div>
<svg class="ic" style="left:259px;top:60px" width="16" height="16" viewBox="0 0 16 16" ><path d="M2 6h6v8H2zM8 8l5-6 2 1-5 7" fill="#e4e4e4" stroke="#bbb"/></svg>
<svg class="ic" style="left:281px;top:60px" width="16" height="16" viewBox="0 0 16 16" ><path d="M2 8l6-4v3h6l-3 6H5V9z" fill="#e4e4e4" stroke="#bbb"/></svg>
<svg class="ic" style="left:303px;top:60px" width="16" height="16" viewBox="0 0 16 16" ><path d="M1 2h11v11H1zM10 8l5 2-4 5z" fill="#eee" stroke="#bbb"/></svg>
<div class="grip" style="left:326px;top:60px;height:17px"></div>
<svg class="ic" style="left:335px;top:60px" width="16" height="16" viewBox="0 0 16 16" ><path d="M5 1h10v8l-3 3H2V4z" fill="#5aa3e8" stroke="#1a4f9c" stroke-width=".8"/><rect x="1" y="7" width="9" height="8" fill="#f6d7a0" stroke="#c80"/></svg>
<svg class="ic" style="left:358px;top:60px" width="16" height="16" viewBox="0 0 16 16" ><path d="M1 5l4-4h10v10l-4 4H1zM1 5h10v10M11 5l4-4" fill="none" stroke="#1a4f9c" stroke-width="1.2"/><path d="M1 5l10 10M11 5L1 15" stroke="#1a4f9c" stroke-width=".6"/></svg>
<svg class="ic" style="left:380px;top:60px" width="16" height="16" viewBox="0 0 16 16" ><path d="M5 1h8v11H5zM1 4h8v11H1z" fill="#cfe4fa" stroke="#1a4f9c" stroke-width="1.1"/></svg>
<div class="sep" style="left:403px;top:59px;height:19px"></div>
<svg class="ic" style="left:410px;top:60px" width="16" height="16" viewBox="0 0 16 16" ><rect x="1" y="3" width="14" height="11" fill="#fff" stroke="#c22" stroke-width="1.4"/><path d="M4 7h8v4H4z" fill="#c22"/><path d="M6 8l4 2" stroke="#5aa3e8" stroke-width="1.500"/></svg>
<svg class="ic" style="left:432px;top:60px" width="16" height="16" viewBox="0 0 16 16" ><rect x="1" y="3" width="14" height="11" fill="#fff" stroke="#c22" stroke-width="1.4"/><path d="M4 7h8v4H4z" fill="#c22"/><path d="M6 8l4 2" stroke="#5aa3e8" stroke-width="1.500"/></svg>
<div class="sep" style="left:455px;top:59px;height:19px"></div>
<svg class="ic" style="left:462px;top:60px" width="16" height="16" viewBox="0 0 16 16" ><path d="M4 4h10l-3 5H1z" fill="none" stroke="#c22" stroke-dasharray="2 1"/><path d="M5 6h6" stroke="#11c" stroke-width="1.500"/></svg>
<svg class="ic" style="left:484px;top:60px" width="16" height="16" viewBox="0 0 16 16" ><path d="M4 2h10l-3 4H1z" fill="none" stroke="#c22" stroke-dasharray="2 1"/><path d="M5 7h8v6l-2 2H3V9z" fill="#5aa3e8" stroke="#11a" stroke-width=".7"/></svg>
<div class="sep" style="left:507px;top:59px;height:19px"></div>
<svg class="ic" style="left:514px;top:60px" width="16" height="16" viewBox="0 0 16 16" ><path d="M4 1h11v9l-3 4H1V5z" fill="#5aa3e8" stroke="#1a4f9c"/><rect x="4" y="2" width="10" height="7" fill="#fff" stroke="#333"/><path d="M5 4v4M7 4l1 4 1-4M12 4h-2v4h2" stroke="#222" fill="none" stroke-width=".7"/></svg>
<div class="sep" style="left:537px;top:59px;height:19px"></div>
<svg class="ic" style="left:544px;top:60px" width="16" height="16" viewBox="0 0 16 16" ><rect x="1" y="2" width="14" height="12" fill="#eee" stroke="#bbb"/><path d="M4 10l4-4h5l-4 4z" fill="#ccc"/></svg>
<svg class="ic" style="left:566px;top:60px" width="16" height="16" viewBox="0 0 16 16" ><rect x="1" y="2" width="14" height="13" fill="#fff" stroke="#c22" stroke-width="1.300"/><path d="M5 6l3-2h5v6l-3 3H5z" fill="#6ab4f0" stroke="#1a4f9c" stroke-width=".6"/><path d="M2 7q2-6 8-4l1-2 2 5-5 .5 1-2q-4-1-5 3zM14 10q-2 6-8 4l-1 2-2-5 5-.5-1 2q4 1 5-3z" fill="#3c3" stroke="#181" stroke-width=".4"/></svg>
<svg class="ic" style="left:588px;top:60px" width="16" height="16" viewBox="0 0 16 16" ><rect x="1" y="2" width="14" height="13" fill="#fff" stroke="#c22" stroke-width="1.300"/><rect x="4" y="5" width="6" height="6" fill="#a8d4f8" stroke="#1a4f9c" stroke-width=".6"/><rect x="7" y="7" width="6" height="6" fill="#6ab4f0" stroke="#1a4f9c" stroke-width=".6"/><path d="M2 7q2-6 8-4l1-2 2 5-5 .5 1-2q-4-1-5 3zM14 10q-2 6-8 4l-1 2-2-5 5-.5-1 2q4 1 5-3z" fill="#3c3" stroke="#181" stroke-width=".4"/></svg>
<div class="sep" style="left:611px;top:59px;height:19px"></div>
<svg class="ic" style="left:619px;top:60px" width="16" height="16" viewBox="0 0 16 16" ><rect x="1" y="1" width="14" height="14" fill="#fff" stroke="#c22" stroke-width="1.4"/><path d="M3 5v6l5-3zM13 5v6L8 8z" fill="none" stroke="#222"/><path d="M8 3v10" stroke="#222"/></svg>
<div class="sep" style="left:641px;top:59px;height:19px"></div>
<svg class="ic" style="left:648px;top:60px" width="16" height="16" viewBox="0 0 16 16" ><text x="3" y="5.5" font-size="6" font-family="Liberation Sans,sans-serif" font-weight="bold" fill="#111" letter-spacing="-0.2">000</text><path d="M1 7h14" stroke="#111"/><path d="M5 7v7M2.500 11.500L5 14l2.500-2.500M1 15.500h10" stroke="#111" fill="none" stroke-width="1.100"/></svg>
<svg class="ic" style="left:670px;top:60px" width="16" height="16" viewBox="0 0 16 16" ><text x="0" y="6.5" font-size="6" font-family="Liberation Sans,sans-serif" font-weight="bold" fill="#111" letter-spacing="-0.45">А+00</text><path d="M0 8h16" stroke="#111"/><text x="0" y="15" font-size="6" font-family="Liberation Sans,sans-serif" font-weight="bold" fill="#111" letter-spacing="-0.45">Б+00</text></svg>
<svg class="ic" style="left:692px;top:60px" width="16" height="16" viewBox="0 0 16 16" ><rect width="16" height="16" fill="#e6e6d2"/><text x="5" y="6" font-size="6.5" font-family="Liberation Sans,sans-serif" font-weight="bold" fill="#d22" letter-spacing="-0.3">10</text><path d="M1.500 7.500h13M2.500 7.500v7.500M13.500 7.500v7.500" stroke="#111"/><path d="M1.500 6l1 1.500-1 1.500M14.500 6l-1 1.500 1 1.500" stroke="#111" fill="none" stroke-width=".7"/><path d="M12 8l-6 6-1.500 1.500.5-2 6-6z" fill="#f0a820" stroke="#222" stroke-width=".6"/></svg>
<svg class="ic" style="left:714px;top:60px" width="16" height="16" viewBox="0 0 16 16" ><path d="M1 5l5 1 8 8-3 1z" fill="#e8c020" stroke="#222" stroke-width=".7"/><path d="M2 3l5 3M1 8l6-1" stroke="#2a2" stroke-width="1.500"/><path d="M11 6l2-5 2 5M12 4h2" stroke="#11c" fill="none"/></svg>
<svg class="ic" style="left:736px;top:60px" width="16" height="16" viewBox="0 0 16 16" ><path d="M4 2v10M1.500 9.500l2.500 2.500 2.500-2.500M7 4h8M7 7h8M7 10h6" stroke="#222" fill="none" stroke-width="1.200"/></svg>
<svg class="ic" style="left:758px;top:60px" width="16" height="16" viewBox="0 0 16 16" ><text x="8.5" y="6" font-size="6.5" font-family="Liberation Sans,sans-serif" font-weight="bold" fill="#111" letter-spacing="-0.3">B1</text><path d="M2 12l7-5" stroke="#111"/><path d="M1.500 9v4h4" stroke="#111" fill="none"/><rect x="7" y="10.500" width="7" height="5" fill="#fff" stroke="#d22"/><path d="M8.500 14l4-2" stroke="#d22"/></svg>
<svg class="ic" style="left:780px;top:60px" width="16" height="16" viewBox="0 0 16 16" ><path d="M1 1v14M15 1v14M1 6h14" stroke="#222"/><path d="M9 4l-3 5h3l-2 5 5-7H9z" fill="#f4d21a" stroke="#c70" stroke-width=".5"/></svg>
<svg class="ic" style="left:802px;top:60px" width="16" height="16" viewBox="0 0 16 16" ><rect width="16" height="16" fill="#e6e6d2"/><text x="5" y="6" font-size="6.5" font-family="Liberation Sans,sans-serif" font-weight="bold" fill="#111" letter-spacing="-0.2">00</text><path d="M1.500 2v13M1.500 8.500h6" stroke="#111"/><path d="M4 6.500L1.500 8.500 4 10.500" stroke="#111" fill="none" stroke-width=".8"/><path d="M14 6l-6 7-1.500 2 2.500-1 6-7z" fill="#a8a8b8" stroke="#222" stroke-width=".6"/><path d="M12.500 5l2 1.500" stroke="#d44" stroke-width="1.500"/></svg>
<div class="sep" style="left:825px;top:59px;height:19px"></div>
<svg class="ic" style="left:832px;top:60px" width="16" height="16" viewBox="0 0 16 16" ><rect x="1" y="3" width="13" height="11" fill="#fff" stroke="#222" stroke-width="1.400"/><path d="M3 12l5-5 3 5z" fill="#334"/><path d="M15 1l-7 8" stroke="#c84" stroke-width="1.500"/></svg>
<div class="sep" style="left:855px;top:59px;height:19px"></div>
<svg class="ic" style="left:862px;top:60px" width="16" height="16" viewBox="0 0 16 16" ><path d="M5 2h10v12H5zM5 6h10M5 10h10M9 2v12M12 2v12" fill="#fff" stroke="#1a5fbc" stroke-width="1.100"/><path d="M1 15l6-6M3 9h4v4" stroke="#d22" fill="none" stroke-width="1.800"/></svg>
<svg class="ic" style="left:884px;top:60px" width="16" height="16" viewBox="0 0 16 16" ><path d="M3 7V2h8l2 2v3" fill="#fff" stroke="#c90"/><rect x="1" y="7" width="14" height="6" rx="1" fill="#f2c45a" stroke="#b80"/><rect x="3" y="11" width="10" height="4" fill="#fff" stroke="#c90"/></svg>
<div class="sep" style="left:907px;top:59px;height:19px"></div>
<svg class="ic" style="left:914px;top:60px" width="16" height="16" viewBox="0 0 16 16" ><rect x="1" y="2" width="14" height="12" fill="#fff" stroke="#1a4f9c" stroke-width="1.400"/><rect x="7" y="6" width="6" height="5" fill="#fdd" stroke="#d22"/></svg>
<svg class="ic" style="left:936px;top:60px" width="16" height="16" viewBox="0 0 16 16" ><path d="M5 1h10v10H5z" fill="#fff" stroke="#d22"/><path d="M1 5h10v10H1z" fill="#5aa3e8" stroke="#1a4f9c"/></svg>
<svg class="ic" style="left:958px;top:60px" width="16" height="16" viewBox="0 0 16 16" ><rect x="1" y="1" width="14" height="13" fill="#fff" stroke="#11a" stroke-width="1.400"/><text x="1.8" y="8.5" font-size="6" font-family="Liberation Sans,sans-serif" font-weight="bold" fill="#111" letter-spacing="-0.4">DWG</text><rect x="7" y="9" width="6" height="4" fill="#fdd" stroke="#d22"/><path d="M2 12l4-2" stroke="#d22"/></svg>
<svg class="ic" style="left:980px;top:60px" width="16" height="16" viewBox="0 0 16 16" ><path d="M4 1h11v9l-3 4H1V5z" fill="#5aa3e8" stroke="#1a4f9c"/><rect x="4" y="2" width="10" height="7" fill="#fff" stroke="#333"/><path d="M5 4v4M7 4l1 4 1-4M12 4h-2v4h2" stroke="#222" fill="none" stroke-width=".7"/></svg>
<svg class="ic" style="left:1002px;top:60px" width="16" height="16" viewBox="0 0 16 16" ><path d="M1 11l6-8h8l-6 8z" fill="none" stroke="#11c" stroke-width="1.2"/><path d="M3 3l10 10" stroke="#e8a020" stroke-width="1.5"/><path d="M12 2q3 3 0 6M4 14q-3-3 0-6" stroke="#d22" fill="none"/></svg>
<svg class="ic" style="left:1024px;top:60px" width="16" height="16" viewBox="0 0 16 16" ><path d="M5 2h10v12H5zM5 6h10M5 10h10M9 2v12M12 2v12" fill="#fff" stroke="#1a5fbc" stroke-width="1.100"/><path d="M1 15l6-6M3 9h4v4" stroke="#d22" fill="none" stroke-width="1.800"/></svg>
<svg class="ic" style="left:1046px;top:60px" width="16" height="16" viewBox="0 0 16 16" ><path d="M5 2h10v12H5zM5 6h10M5 10h10M9 2v12M12 2v12" fill="#fff" stroke="#1a5fbc" stroke-width="1.100"/><path d="M1 15l6-6M3 9h4v4" stroke="#d22" fill="none" stroke-width="1.800"/></svg>
<div class="a" style="left:0;top:80px;width:1918px;height:1px;background:#e3e3e3"></div>
<div class="a" style="left:0;top:82px;width:433px;height:16px;border:1px solid #a0a0a0;border-top-color:#fff;border-left-color:#fff;background:#f0f0f0"></div>
<div class="a" style="left:4px;top:83px;font-size:11.6px;line-height:14px;white-space:nowrap">Model Studio CS</div>
<svg class="ic" style="left:403px;top:85px" width="9" height="10"><path d="M2 1h5M3 1v5M6 1v5M1 6h7M4.500 6v4" stroke="#000" fill="none" stroke-width="1.2"/></svg>
<svg class="ic" style="left:419px;top:85px" width="10" height="10"><path d="M1 1l8 8M9 1l-8 8" stroke="#000" stroke-width="1.6"/></svg>
<div class="a" style="left:42px;top:71px;width:65px;height:17px;background:#fff;border-left:1px solid #555;border-top:1px solid #555"></div>
<div class="sel" style="left:155px;top:100px;width:23px;height:22px;border-color:#9cc8ee"></div>
<svg class="ic" style="left:4px;top:103px" width="16" height="16" viewBox="0 0 16 16" ><path d="M3 6V1h8v5" fill="#f8e6a0" stroke="#c90"/><rect x="1" y="6" width="14" height="8" rx="2" fill="#f2c45a" stroke="#b80"/><rect x="3" y="10" width="10" height="3" fill="#fbe9a8"/></svg>
<svg class="ic" style="left:26px;top:109px" width="8" height="5"><path d="M0 0h8L4 4z" fill="#222"/></svg>
<div class="sep" style="left:40px;top:102px;height:20px;background:#999"></div>
<svg class="ic" style="left:48px;top:103px" width="16" height="16" viewBox="0 0 16 16" ><path d="M2 1h7v11H2z" fill="#e8b020" stroke="#a70"/><path d="M9 5q4 0 4 4l2-1-3 4-2-4h2q0-2-3-2z" fill="#1a9a1a"/><path d="M8 15q-3 0-3-3" stroke="#1a9a1a" fill="none" stroke-width="1.5"/></svg>
<div class="sep" style="left:71px;top:102px;height:20px;background:#999"></div>
<svg class="ic" style="left:80px;top:103px" width="16" height="16" viewBox="0 0 16 16" ><path d="M1 2l5 6-5 6zM6 2l5 6-5 6z" fill="#666"/><path d="M13 2v12" stroke="#666" stroke-width="2"/></svg>
<svg class="ic" style="left:104px;top:109px" width="8" height="5"><path d="M0 0h8L4 4z" fill="#777"/></svg>
<div class="sep" style="left:117px;top:102px;height:20px;background:#999"></div>
<svg class="ic" style="left:126px;top:103px" width="16" height="16" viewBox="0 0 16 16" ><path d="M2 2h2l1 1v3H2z" fill="#fff" stroke="#d60" stroke-width=".8"/><path d="M1 8h5" stroke="#11a"/><path d="M10 8h2l1 1v3h-3z" fill="#fff" stroke="#d60" stroke-width=".8"/><path d="M9 14h5" stroke="#11a"/></svg>
<svg class="ic" style="left:144px;top:109px" width="8" height="5"><path d="M0 0h8L4 4z" fill="#222"/></svg>
<svg class="ic" style="left:159px;top:103px" width="16" height="16" viewBox="0 0 16 16" ><rect x="2.500" y="4.500" width="11" height="7" rx="1" fill="#fff" stroke="#5a7ab0"/><path d="M4.500 7h1.500M7.500 7h4M4.500 9.500h1.500M7.500 9.500h4" stroke="#5a7ab0"/></svg>
<div class="sep" style="left:180px;top:102px;height:20px;background:#999"></div>
<svg class="ic" style="left:188px;top:103px" width="16" height="16" viewBox="0 0 16 16" ><path d="M1 3h8L6 7v5H4V7z" fill="#222"/><path d="M10 8h5M10 11h5" stroke="#222" stroke-width="1.6"/></svg>
<svg class="ic" style="left:206px;top:109px" width="8" height="5"><path d="M0 0h8L4 4z" fill="#222"/></svg>
<svg class="ic" style="left:221px;top:103px" width="16" height="16" viewBox="0 0 16 16" ><path d="M3 1h3v4l2 2v7H1V7l2-2zM10 1h3v4l2 2v7H8V7l2-2z" fill="#e8b020" stroke="#960" stroke-width=".8"/></svg>
<svg class="ic" style="left:244px;top:103px" width="16" height="16" viewBox="0 0 16 16" ><defs><linearGradient id="fg" x1="0" x2="1"><stop offset="0" stop-color="#f4f4f4"/><stop offset=".5" stop-color="#9a9a9a"/><stop offset="1" stop-color="#2a2a2a"/></linearGradient></defs><path d="M1 4.500h13L9.500 9.500v5.500h-4V9.500z" fill="url(#fg)" stroke="#555" stroke-width=".6"/><path d="M3.500 4q4-5 8 0z" fill="#f8d040" stroke="#e0a010" stroke-width=".6"/></svg>
<div class="sep" style="left:266px;top:102px;height:20px;background:#999"></div>
<svg class="ic" style="left:274px;top:103px" width="16" height="16" viewBox="0 0 16 16" ><rect x="1.500" y="1.500" width="8" height="9" fill="#f8e4b0" stroke="#c89838"/><rect x="2.500" y="8.500" width="11" height="6" fill="#fbeccc" stroke="#c89838"/><path d="M9.500 8.500h3l1.500 1.500v4.500h-4.500z" fill="#fff" stroke="#c89838"/><path d="M3.500 4.500l6 5M3.500 4.500l3-.5M3.500 4.500l.5 3" stroke="#a010c0" fill="none" stroke-width="1.400"/></svg>
<div class="a" style="left:0;top:128px;width:285px;height:24px;background:#fff;border-right:1px solid #a0a0a0;border-bottom:1px solid #a0a0a0"></div>
<svg class="ic" style="left:3px;top:132px" width="16" height="16" viewBox="0 0 16 16" ><rect x="1" y="1" width="7" height="7" rx="1" fill="#f6d060" stroke="#c08a10"/><rect x="7" y="7" width="7" height="7" rx="1" fill="#f6d060" stroke="#c08a10"/><path d="M3 9v4h4" stroke="#1030c0" fill="none" stroke-width="1.800"/></svg>
<div class="a" style="left:22px;top:132px;font-size:11px;line-height:16px">По типу</div>
<div class="a" style="left:285px;top:128px;width:128px;height:24px;background:#fff"></div>
<svg class="ic" style="left:294px;top:131px" width="16" height="16" viewBox="0 0 16 16" ><defs><radialGradient id="ng" cx=".4" cy=".3" r=".8"><stop offset="0" stop-color="#b8e8a8"/><stop offset=".6" stop-color="#4aa84a"/><stop offset="1" stop-color="#1a6a1a"/></radialGradient></defs><circle cx="8" cy="8" r="7" fill="url(#ng)" stroke="#1a5a1a" stroke-width=".8"/><path d="M8.500 3.500L4 8l4.500 4.500V10H12V6H8.500z" fill="#fff" stroke="#111" stroke-width=".9"/></svg>
<svg class="ic" style="left:315px;top:137px" width="8" height="5"><path d="M0 0h8L4 4.500z" fill="#222"/></svg>
<svg class="ic" style="left:331px;top:131px" width="16" height="16" viewBox="0 0 16 16" ><path d="M1 4.500h5l1.500 1.500h8v8.500H1z" fill="#f0d060" stroke="#8a6a10" stroke-width=".8"/><path d="M1 14.500h14.500" stroke="#5a4208" stroke-width="1.200"/><path d="M7 12q4-1 4-6h-2.500L12 2l3.500 4H13q0 6-6 6z" fill="#2aa82a" stroke="#0a6a0a" stroke-width=".6"/></svg>
<svg class="ic" style="left:353px;top:131px" width="16" height="16" viewBox="0 0 16 16" ><defs><radialGradient id="ng" cx=".4" cy=".3" r=".8"><stop offset="0" stop-color="#b8e8a8"/><stop offset=".6" stop-color="#4aa84a"/><stop offset="1" stop-color="#1a6a1a"/></radialGradient></defs><circle cx="8" cy="8" r="7" fill="url(#ng)" stroke="#1a5a1a" stroke-width=".8"/><path d="M7.500 3.500L12 8l-4.500 4.500V10H4V6h3.500z" fill="#fff" stroke="#111" stroke-width=".9"/></svg>
<svg class="ic" style="left:371px;top:137px" width="8" height="5"><path d="M0 0h8L4 4.500z" fill="#222"/></svg>
<div class="sep" style="left:384px;top:130px;height:19px;background:#999"></div>
<div class="sel" style="left:390px;top:128px;width:23px;height:21px;border-color:#9cc8ee"></div>
<svg class="ic" style="left:394px;top:131px" width="16" height="16" viewBox="0 0 16 16" ><path d="M1.500 14.500l5-5" stroke="#666" stroke-width="1.600"/><path d="M5 7l4-2.500 3.500 3L10 11.500z" fill="#e4e4e4" stroke="#555" stroke-width=".8"/><circle cx="11.500" cy="4.500" r="3" fill="#f4f4f4" stroke="#555" stroke-width=".8"/><circle cx="10.800" cy="3.800" r="1" fill="#fff"/></svg>
<div class="a" style="left:0;top:152px;width:396px;height:270px;background:#fff"></div>
<div class="a" style="left:396px;top:152px;width:17px;height:270px;background:#f0f0f0"></div>
<div class="a" style="left:397px;top:270px;width:15px;height:90px;background:#cdcdcd"></div>
<svg class="ic" style="left:400px;top:158px" width="10" height="8"><path d="M1 6l4-4 4 4" stroke="#505050" fill="none" stroke-width="1.600"/></svg>
<svg class="ic" style="left:400px;top:411px" width="10" height="8"><path d="M1 2l4 4 4-4" stroke="#505050" fill="none" stroke-width="1.600"/></svg>
<div class="tree">
<div class="a" style="left:11px;top:152px;width:1px;height:270px;height:270px;background:repeating-linear-gradient(#fff 0 1px,#9a9a9a 1px 2px)"></div>
<div class="a" style="left:30px;top:182px;width:1px;height:6px;background:repeating-linear-gradient(#fff 0 1px,#9a9a9a 1px 2px)"></div>
<div class="a" style="left:49px;top:198px;width:1px;height:224px;background:repeating-linear-gradient(#fff 0 1px,#9a9a9a 1px 2px)"></div>
<div class="a" style="left:16px;top:160px;width:6px;height:1px;background:repeating-linear-gradient(90deg,#fff 0 1px,#9a9a9a 1px 2px)"></div>
<span class="pm p" style="left:7px;top:156px"></span>
<svg class="ic" style="left:22px;top:152px" width="16" height="16" viewBox="0 0 16 16" ><path d="M1 3l2-2h4l1 2h6v10H1z" fill="#f0e68a" stroke="#555"/><circle cx="9" cy="9" r="3" fill="#eaf2ff" stroke="#222"/><path d="M11 11l3 3" stroke="#c22" stroke-width="1.800"/><path d="M1 13h10" stroke="#000"/></svg>
<div style="left:43px;top:152px">Оборудование.Конструктор</div>
<div class="a" style="left:16px;top:176px;width:6px;height:1px;background:repeating-linear-gradient(90deg,#fff 0 1px,#9a9a9a 1px 2px)"></div>
<span class="pm " style="left:7px;top:172px"></span>
<svg class="ic" style="left:22px;top:168px" width="16" height="16" viewBox="0 0 16 16" ><path d="M1 3l2-2h4l1 2h6v10H1z" fill="#f0e68a" stroke="#555"/><circle cx="9" cy="9" r="3" fill="#eaf2ff" stroke="#222"/><path d="M11 11l3 3" stroke="#c22" stroke-width="1.800"/><path d="M1 13h10" stroke="#000"/></svg>
<div style="left:43px;top:168px">Оборудование.Технологическое</div>
<div class="a" style="left:35px;top:192px;width:6px;height:1px;background:repeating-linear-gradient(90deg,#fff 0 1px,#9a9a9a 1px 2px)"></div>
<span class="pm " style="left:26px;top:188px"></span>
<svg class="ic" style="left:42px;top:184px" width="16" height="16" viewBox="0 0 16 16" ><rect x="1" y="1" width="7" height="7" rx="1" fill="#f6d060" stroke="#c08a10"/><rect x="7" y="7" width="7" height="7" rx="1" fill="#f6d060" stroke="#c08a10"/><path d="M3 9v4h4" stroke="#1030c0" fill="none" stroke-width="1.800"/></svg>
<div style="left:60px;top:184px;width:43px;background:#7a9ed0"></div>
<div style="left:62px;top:184px">По типу</div>
<div class="a" style="left:54px;top:208px;width:6px;height:1px;background:repeating-linear-gradient(90deg,#fff 0 1px,#9a9a9a 1px 2px)"></div>
<span class="pm p" style="left:45px;top:204px"></span>
<svg class="ic" style="left:61px;top:200px" width="16" height="16" viewBox="0 0 16 16" ><rect x="1" y="1" width="7" height="7" rx="1" fill="#f6d060" stroke="#c08a10"/><rect x="7" y="7" width="7" height="7" rx="1" fill="#f6d060" stroke="#c08a10"/><path d="M3 9v4h4" stroke="#1030c0" fill="none" stroke-width="1.800"/></svg>
<div style="left:81px;top:200px">Гидрант пожарный - Группа изделий</div>
<div class="a" style="left:54px;top:224px;width:6px;height:1px;background:repeating-linear-gradient(90deg,#fff 0 1px,#9a9a9a 1px 2px)"></div>
<span class="pm p" style="left:45px;top:220px"></span>
<svg class="ic" style="left:61px;top:216px" width="16" height="16" viewBox="0 0 16 16" ><rect x="1" y="1" width="7" height="7" rx="1" fill="#f6d060" stroke="#c08a10"/><rect x="7" y="7" width="7" height="7" rx="1" fill="#f6d060" stroke="#c08a10"/><path d="M3 9v4h4" stroke="#1030c0" fill="none" stroke-width="1.800"/></svg>
<div style="left:81px;top:216px">Емкостное оборудование - Группа изделий</div>
<div class="a" style="left:54px;top:240px;width:6px;height:1px;background:repeating-linear-gradient(90deg,#fff 0 1px,#9a9a9a 1px 2px)"></div>
<span class="pm p" style="left:45px;top:236px"></span>
<svg class="ic" style="left:61px;top:232px" width="16" height="16" viewBox="0 0 16 16" ><rect x="1" y="1" width="7" height="7" rx="1" fill="#f6d060" stroke="#c08a10"/><rect x="7" y="7" width="7" height="7" rx="1" fill="#f6d060" stroke="#c08a10"/><path d="M3 9v4h4" stroke="#1030c0" fill="none" stroke-width="1.800"/></svg>
<div style="left:81px;top:232px">Колонное оборудование - Группа изделий</div>
<div class="a" style="left:54px;top:256px;width:6px;height:1px;background:repeating-linear-gradient(90deg,#fff 0 1px,#9a9a9a 1px 2px)"></div>
<span class="pm p" style="left:45px;top:252px"></span>
<svg class="ic" style="left:61px;top:248px" width="16" height="16" viewBox="0 0 16 16" ><rect x="1" y="1" width="7" height="7" rx="1" fill="#f6d060" stroke="#c08a10"/><rect x="7" y="7" width="7" height="7" rx="1" fill="#f6d060" stroke="#c08a10"/><path d="M3 9v4h4" stroke="#1030c0" fill="none" stroke-width="1.800"/></svg>
<div style="left:81px;top:248px">Котельное оборудование - Группа изделий</div>
<div class="a" style="left:54px;top:272px;width:6px;height:1px;background:repeating-linear-gradient(90deg,#fff 0 1px,#9a9a9a 1px 2px)"></div>
<span class="pm p" style="left:45px;top:268px"></span>
<svg class="ic" style="left:61px;top:264px" width="16" height="16" viewBox="0 0 16 16" ><rect x="1" y="1" width="7" height="7" rx="1" fill="#f6d060" stroke="#c08a10"/><rect x="7" y="7" width="7" height="7" rx="1" fill="#f6d060" stroke="#c08a10"/><path d="M3 9v4h4" stroke="#1030c0" fill="none" stroke-width="1.800"/></svg>
<div style="left:81px;top:264px">Люди - Группа изделий</div>
<div class="a" style="left:54px;top:288px;width:6px;height:1px;background:repeating-linear-gradient(90deg,#fff 0 1px,#9a9a9a 1px 2px)"></div>
<span class="pm p" style="left:45px;top:284px"></span>
<svg class="ic" style="left:61px;top:280px" width="16" height="16" viewBox="0 0 16 16" ><rect x="1" y="1" width="7" height="7" rx="1" fill="#f6d060" stroke="#c08a10"/><rect x="7" y="7" width="7" height="7" rx="1" fill="#f6d060" stroke="#c08a10"/><path d="M3 9v4h4" stroke="#1030c0" fill="none" stroke-width="1.800"/></svg>
<div style="left:81px;top:280px">Мебель - Группа изделий</div>
<div class="a" style="left:54px;top:304px;width:6px;height:1px;background:repeating-linear-gradient(90deg,#fff 0 1px,#9a9a9a 1px 2px)"></div>
<span class="pm p" style="left:45px;top:300px"></span>
<svg class="ic" style="left:61px;top:296px" width="16" height="16" viewBox="0 0 16 16" ><rect x="1" y="1" width="7" height="7" rx="1" fill="#f6d060" stroke="#c08a10"/><rect x="7" y="7" width="7" height="7" rx="1" fill="#f6d060" stroke="#c08a10"/><path d="M3 9v4h4" stroke="#1030c0" fill="none" stroke-width="1.800"/></svg>
<div style="left:81px;top:296px">Насосное оборудование - Группа изделий</div>
<div class="a" style="left:54px;top:320px;width:6px;height:1px;background:repeating-linear-gradient(90deg,#fff 0 1px,#9a9a9a 1px 2px)"></div>
<span class="pm p" style="left:45px;top:316px"></span>
<svg class="ic" style="left:61px;top:312px" width="16" height="16" viewBox="0 0 16 16" ><rect x="1" y="1" width="7" height="7" rx="1" fill="#f6d060" stroke="#c08a10"/><rect x="7" y="7" width="7" height="7" rx="1" fill="#f6d060" stroke="#c08a10"/><path d="M3 9v4h4" stroke="#1030c0" fill="none" stroke-width="1.800"/></svg>
<div style="left:81px;top:312px">Обустройство терминалов - Группа изделий</div>
<div class="a" style="left:54px;top:336px;width:6px;height:1px;background:repeating-linear-gradient(90deg,#fff 0 1px,#9a9a9a 1px 2px)"></div>
<span class="pm p" style="left:45px;top:332px"></span>
<svg class="ic" style="left:61px;top:328px" width="16" height="16" viewBox="0 0 16 16" ><rect x="1" y="1" width="7" height="7" rx="1" fill="#f6d060" stroke="#c08a10"/><rect x="7" y="7" width="7" height="7" rx="1" fill="#f6d060" stroke="#c08a10"/><path d="M3 9v4h4" stroke="#1030c0" fill="none" stroke-width="1.800"/></svg>
<div style="left:81px;top:328px">Опоры трубопроводов - Группа изделий</div>
<div class="a" style="left:54px;top:352px;width:6px;height:1px;background:repeating-linear-gradient(90deg,#fff 0 1px,#9a9a9a 1px 2px)"></div>
<span class="pm p" style="left:45px;top:348px"></span>
<svg class="ic" style="left:61px;top:344px" width="16" height="16" viewBox="0 0 16 16" ><rect x="1" y="1" width="7" height="7" rx="1" fill="#f6d060" stroke="#c08a10"/><rect x="7" y="7" width="7" height="7" rx="1" fill="#f6d060" stroke="#c08a10"/><path d="M3 9v4h4" stroke="#1030c0" fill="none" stroke-width="1.800"/></svg>
<div style="left:81px;top:344px">Отопительный прибор - Группа изделий</div>
<div class="a" style="left:54px;top:368px;width:6px;height:1px;background:repeating-linear-gradient(90deg,#fff 0 1px,#9a9a9a 1px 2px)"></div>
<span class="pm p" style="left:45px;top:364px"></span>
<svg class="ic" style="left:61px;top:360px" width="16" height="16" viewBox="0 0 16 16" ><rect x="1" y="1" width="7" height="7" rx="1" fill="#f6d060" stroke="#c08a10"/><rect x="7" y="7" width="7" height="7" rx="1" fill="#f6d060" stroke="#c08a10"/><path d="M3 9v4h4" stroke="#1030c0" fill="none" stroke-width="1.800"/></svg>
<div style="left:81px;top:360px">Печи - Группа изделий</div>
<div class="a" style="left:54px;top:384px;width:6px;height:1px;background:repeating-linear-gradient(90deg,#fff 0 1px,#9a9a9a 1px 2px)"></div>
<span class="pm p" style="left:45px;top:380px"></span>
<svg class="ic" style="left:61px;top:376px" width="16" height="16" viewBox="0 0 16 16" ><rect x="1" y="1" width="7" height="7" rx="1" fill="#f6d060" stroke="#c08a10"/><rect x="7" y="7" width="7" height="7" rx="1" fill="#f6d060" stroke="#c08a10"/><path d="M3 9v4h4" stroke="#1030c0" fill="none" stroke-width="1.800"/></svg>
<div style="left:81px;top:376px">Резервуары - Группа изделий</div>
<div class="a" style="left:54px;top:400px;width:6px;height:1px;background:repeating-linear-gradient(90deg,#fff 0 1px,#9a9a9a 1px 2px)"></div>
<span class="pm p" style="left:45px;top:396px"></span>
<svg class="ic" style="left:61px;top:392px" width="16" height="16" viewBox="0 0 16 16" ><rect x="1" y="1" width="7" height="7" rx="1" fill="#f6d060" stroke="#c08a10"/><rect x="7" y="7" width="7" height="7" rx="1" fill="#f6d060" stroke="#c08a10"/><path d="M3 9v4h4" stroke="#1030c0" fill="none" stroke-width="1.800"/></svg>
<div style="left:81px;top:392px">Сепарационное оборудование - Группа изделий</div>
<div class="a" style="left:54px;top:416px;width:6px;height:1px;background:repeating-linear-gradient(90deg,#fff 0 1px,#9a9a9a 1px 2px)"></div>
<span class="pm p" style="left:45px;top:412px"></span>
<svg class="ic" style="left:61px;top:408px" width="16" height="16" viewBox="0 0 16 16" ><rect x="1" y="1" width="7" height="7" rx="1" fill="#f6d060" stroke="#c08a10"/><rect x="7" y="7" width="7" height="7" rx="1" fill="#f6d060" stroke="#c08a10"/><path d="M3 9v4h4" stroke="#1030c0" fill="none" stroke-width="1.800"/></svg>
<div style="left:81px;top:408px">Теплообменное оборудование - Группа изделий</div>
</div>
<div class="a" style="left:0;top:422px;width:413px;height:1px;background:#a0a0a0"></div>
<div class="a" style="left:0;top:427px;width:413px;height:1px;background:#a0a0a0"></div>
<div class="a" style="left:0;top:428px;width:396px;height:340px;background:#fff"></div>
<div class="a" style="left:396px;top:428px;width:17px;height:340px;background:#f0f0f0"></div>
<div class="a" style="left:397px;top:456px;width:15px;height:17px;background:#cdcdcd"></div>
<svg class="ic" style="left:400px;top:434px" width="10" height="8"><path d="M1 6l4-4 4 4" stroke="#505050" fill="none" stroke-width="1.600"/></svg>
<svg class="ic" style="left:400px;top:757px" width="10" height="8"><path d="M1 2l4 4 4-4" stroke="#505050" fill="none" stroke-width="1.600"/></svg>
<div class="th" style="left:40px;top:446px;height:98px;width:112px"></div>
<div class="th" style="left:35px;top:441px;height:108px;width:112px"></div>
<div class="th" style="left:30px;top:436px;height:118px;width:112px"></div>
<div class="th" style="left:24px;top:431px"></div>
<div class="th" style="left:211px;top:446px;height:98px;width:112px"></div>
<div class="th" style="left:206px;top:441px;height:108px;width:112px"></div>
<div class="th" style="left:201px;top:436px;height:118px;width:112px"></div>
<div class="th" style="left:195px;top:431px"></div>
<div class="th" style="left:40px;top:617px;height:98px;width:112px"></div>
<div class="th" style="left:35px;top:612px;height:108px;width:112px"></div>
<div class="th" style="left:30px;top:607px;height:118px;width:112px"></div>
<div class="th" style="left:24px;top:602px"></div>
<div class="th" style="left:211px;top:617px;height:98px;width:112px"></div>
<div class="th" style="left:206px;top:612px;height:108px;width:112px"></div>
<div class="th" style="left:201px;top:607px;height:118px;width:112px"></div>
<div class="th" style="left:195px;top:602px"></div>
<svg class="ic" style="left:24px;top:431px" width="112" height="127" viewBox="0 0 112 127"><defs><linearGradient id="tb" x1="0" y1="0" x2="1" y2="1"><stop offset="0" stop-color="#5a5ed0"/><stop offset=".5" stop-color="#4f78c0"/><stop offset="1" stop-color="#35907a"/></linearGradient><linearGradient id="tg" x1="0" y1="0" x2="1" y2="1"><stop offset="0" stop-color="#96969c"/><stop offset="1" stop-color="#5c5c66"/></linearGradient></defs><g fill="url(#tb)" stroke="#0a0a28" stroke-width="1"><path d="M14.400 85.700L35.500 99.800 83.200 74.800 66 64 40 72z"/><path d="M14.400 85.700v8.600l21.100 12.500 47.700-25.800v-6.300L35.500 99.800z" fill="#3f8a80"/><path d="M35.500 99.800v7"/><path d="M62 22.800a22.700 22.700 0 0 1 30 8l4 12-6 14-18 10z" fill="#4a7ab8"/><ellipse cx="89.500" cy="37" rx="7" ry="11.500" fill="#4f86b0"/><circle cx="70" cy="45.500" r="22.700"/><path d="M60 68l6 12 20-8 2-14z" fill="#4a80b0"/><circle cx="60.500" cy="55" r="12.500"/><circle cx="58" cy="57.500" r="8.500"/><path d="M16 66.200L42.500 50.500A8.600 10.500 -20 0 1 52.700 70L29.300 84.200z"/><ellipse cx="20.600" cy="76.300" rx="8.600" ry="10.500" transform="rotate(-20 20.600 76.300)"/><ellipse cx="19.500" cy="77" rx="4.500" ry="5.500" transform="rotate(-20 19.500 77)"/><ellipse cx="19" cy="77.500" rx="2" ry="2.500"/><path d="M80 66l12-2v16l-10 2z" fill="#4a80b0"/><circle cx="94.200" cy="73.200" r="7.800"/><circle cx="94.700" cy="73.700" r="4.800" fill="#3f8a80"/></g></svg>
<svg class="ic" style="left:195px;top:431px" width="112" height="127" viewBox="0 0 112 127"><g stroke="#16161a" stroke-width=".9"><path d="M26.300 25.500h3.900v30h-3.900zM49.700 12.200h4v30h-4z" fill="#77777e"/><path d="M17.700 106l21.100 14 54-31.200v-6L76 76 30 98z" fill="#8a8a92"/><path d="M21.600 56.800L76.300 27 90.400 34 93.500 71.600 92.800 84 40 114 38 76z" fill="#6c6c76"/><path d="M21.600 56.800Q18 64 18.500 74.800L17.700 100 38.800 114 39 76 36 64z" fill="#8c8c94"/><path d="M21.600 56.800L36 64 90.400 34M18.500 82L39 92M39 92L93 62" fill="none"/><path d="M76.300 27L90.400 34 93.500 71.600 86 76 84 38z" fill="#7c7c86"/><path d="M55.200 42.700h3.900v54h-3.900zM78.700 28.600h3.900v55.600h-3.900z" fill="#77777e"/><path d="M40 100h14v10M60 90h16v10M62 96h10" fill="none" stroke-width=".7"/></g></svg>
<svg class="ic" style="left:24px;top:602px" width="112" height="127" viewBox="0 0 112 127"><g fill="url(#tb)" stroke="#0a0a28" stroke-width="1"><path d="M35.500 85h7v9.300h-4zM80.900 58.300h7v9.400h-4z" fill="#4a6ab0"/><path d="M15.200 73.200L89.500 31A9.200 12.100 -20 0 1 102 51.300L25.300 96.700z"/><path d="M89.500 31A9.200 12.100 -20 0 1 102 51.300" fill="none" stroke-width="2"/><ellipse cx="17.500" cy="84.900" rx="9.200" ry="12.100" transform="rotate(-20 17.500 84.900)"/><ellipse cx="55" cy="52" rx="4.500" ry="3.500" fill="#2a3a80"/><ellipse cx="66.800" cy="45" rx="4.500" ry="3.500" fill="#2a3a80"/><ellipse cx="87.900" cy="34" rx="2.500" ry="2" fill="#2a3a80"/><ellipse cx="26.900" cy="69.300" rx="2" ry="1.800" fill="#2a3a80"/><ellipse cx="12.800" cy="88" rx="2.800" ry="3.200" fill="#1a2a60"/></g></svg>
<svg class="ic" style="left:195px;top:602px" width="112" height="127" viewBox="0 0 112 127"><g fill="url(#tg)" stroke="#16161a" stroke-width="1"><path d="M34.900 85.700h8.600v8.600h-5zM78.700 59.100h7.800v10.200h-4.500z" fill="#77777e"/><path d="M14.500 73.200L88.800 31.800A10.200 12.500 -20 0 1 101.400 51.300L26.300 96.700z"/><path d="M88.800 31.800A10.200 12.500 -20 0 1 101.400 51.300" fill="none" stroke-width="2"/><ellipse cx="17.700" cy="86.500" rx="10.200" ry="12.500" transform="rotate(-20 17.700 86.500)" fill="#8c8c94"/><ellipse cx="48.200" cy="54.400" rx="5.500" ry="4" fill="#18181c"/><ellipse cx="71.600" cy="42.700" rx="2.200" ry="1.800" fill="#18181c"/><ellipse cx="88.500" cy="33" rx="2" ry="1.500" fill="#18181c"/><path d="M22 72l12-7M14 84l4 6" stroke="#16161a" stroke-width="1.500" stroke-dasharray="2 1.500" fill="none"/><path d="M8 84l-1.500 1M8.500 90l-1.500 1M11 96l-1 1.500M15 99.500l-.5 1.500" stroke="#2a8a2a" stroke-width=".8"/></g></svg>
<div class="thl" style="left:0;top:562px;width:177px">Насос центробежный (277 шт.)</div>
<div class="thl" style="left:171px;top:562px;width:177px">Печь (2 шт.)</div>
<div class="thl" style="left:0;top:733px;width:177px">Сепаратор входной (2 шт.)</div>
<div class="thl" style="left:171px;top:733px;width:177px">Сепаратор нефтегазовый типа<br>НГСВ (18 шт.)</div>
<div class="a" style="left:0;top:768px;width:413px;height:1px;background:#a0a0a0"></div>
<div class="a" style="left:0;top:770px;width:395px;height:19px;background:#fff;border:2px solid #6d6d6d;border-right-color:#d0d0d0;border-bottom-color:#d0d0d0"></div>
<div class="a" style="left:397px;top:771px;width:15px;height:17px;border:1px solid #adadad;background:#e6e6e6;text-align:center;line-height:14px;font-size:11px">x</div>
<div class="a" style="left:0;top:814px;width:411px;height:158px;background:#fff;border:1px solid #dadada"></div>
<div class="a" style="left:73px;top:796px;width:53px;height:19px;border:1px solid #dadada;border-bottom:none;text-align:center;line-height:18px;font-size:11px">Рисунок</div>
<div class="a" style="left:126px;top:796px;width:48px;height:19px;border:1px solid #dadada;border-bottom:none;text-align:center;line-height:18px;font-size:11px">Файлы</div>
<div class="a" style="left:0;top:793px;width:74px;height:22px;background:#fff;border:1px solid #dadada;border-bottom:none;text-align:center;line-height:20px;font-size:11px">Параметры</div>
<div class="a" style="left:4px;top:817px;width:405px;height:25px;background:#f0f0f0"></div>
<div class="a" style="left:4px;top:842px;width:20px;height:126px;background:#f0f0f0"></div>
<div class="sel" style="left:4px;top:817px;width:23px;height:21px;border-color:#9cc8ee"></div>
<div class="sel" style="left:73px;top:817px;width:23px;height:21px;border-color:#9cc8ee"></div>
<svg class="ic" style="left:7px;top:820px" width="16" height="16" viewBox="0 0 16 16" ><rect x="1" y="1" width="5" height="5" fill="#fff" stroke="#333"/><path d="M2 3.500h3M3.500 2v3" stroke="#000"/><rect x="1" y="9" width="5" height="5" fill="#fff" stroke="#333"/><path d="M2 11.500h3M3.500 10v3" stroke="#000"/><path d="M8 2h5M8 5h5M8 8h5M8 11h5M8 14h5" stroke="#777" stroke-dasharray="1 1"/></svg>
<svg class="ic" style="left:30px;top:820px" width="16" height="16" viewBox="0 0 16 16" ><text x="0" y="7" font-size="8" font-family="Liberation Serif" fill="#2a3e9c" font-weight="bold">A</text><text x="0" y="15" font-size="8" font-family="Liberation Serif" fill="#a22" font-weight="bold">Z</text><path d="M12 1v13M9.500 11l2.500 3 2.500-3" stroke="#000" fill="none" stroke-width="1.200"/></svg>
<svg class="ic" style="left:52px;top:820px" width="16" height="16" viewBox="0 0 16 16" ><path d="M1 15L15 1" stroke="#555"/><rect x="1" y="1" width="6" height="6" fill="#fff" stroke="#555"/><path d="M2.500 4h3M4 2.500v3" stroke="#000"/><rect x="9" y="9" width="6" height="6" fill="#fff" stroke="#555"/><path d="M10.500 12h3" stroke="#000"/></svg>
<svg class="ic" style="left:76px;top:820px" width="16" height="16" viewBox="0 0 16 16" ><rect x="1" y="6" width="14" height="9" fill="#dfe" stroke="#2a5a8a"/><path d="M3 9h4M3 12h4M9 9h4M9 12h4" stroke="#2a5a8a"/><path d="M13 1l1.500 1.500-6 8-2 .5.500-2z" fill="#e8c020" stroke="#a22" stroke-width=".7"/></svg>
<div class="a" style="left:413px;top:98px;width:20px;height:874px;background:#f0f0f0"></div>
<svg class="ic" style="left:414px;top:100px" width="20" height="125"><path d="M0 0H12Q18.500 0 18.500 7V125H0z" fill="#a0a0a0"/><path d="M18.500 7V125" stroke="#606060" stroke-width="1"/></svg>
<div class="vt" style="top:100px;height:125px;background:none"><span>Навигатор</span></div>
<div class="vt act" style="top:225px;height:124px"><span>Библиотека стандарт...</span></div>
<svg class="ic" style="left:414px;top:349px" width="20" height="126"><path d="M0 0H18.500V126H0z" fill="#a0a0a0"/><path d="M18.500 0V126" stroke="#606060" stroke-width="1"/></svg>
<div class="vt" style="top:349px;height:126px;background:none"><span>Задания</span></div>
<svg class="ic" style="left:414px;top:475px" width="20" height="125"><path d="M0 0H18.500V125H0z" fill="#a0a0a0"/><path d="M18.500 0V125" stroke="#606060" stroke-width="1"/></svg>
<div class="vt" style="top:475px;height:125px;background:none"><span>Трассирование</span></div>
<svg class="ic" style="left:414px;top:600px" width="20" height="123"><path d="M0 0H18.500V123H0z" fill="#a0a0a0"/><path d="M18.500 0V123" stroke="#606060" stroke-width="1"/></svg>
<div class="vt" style="top:600px;height:123px;background:none"><span>CadLib Проект</span></div>
<svg class="ic" style="left:414px;top:723px" width="20" height="127"><path d="M0 0H18.500V127H0z" fill="#a0a0a0"/><path d="M18.500 0V127" stroke="#606060" stroke-width="1"/></svg>
<div class="vt" style="top:723px;height:127px;background:none"><span>Текущие переменные</span></div>
<svg class="ic" style="left:414px;top:850px" width="20" height="123"><path d="M0 0H18.500V123H0z" fill="#a0a0a0"/><path d="M18.500 0V123" stroke="#606060" stroke-width="1"/></svg>
<div class="vt" style="top:850px;height:123px;background:none"><span>Чат</span></div>
<svg class="ic" style="left:414px;top:471px" width="20" height="8"><path d="M0 4H15.500" stroke="#555" stroke-width="1"/><path d="M19.500 .5L15.500 4l4 3.500z" fill="#f0f0f0"/><path d="M19 .7L15.500 4l3.500 3.300" stroke="#555" fill="none" stroke-width=".9"/></svg>
<svg class="ic" style="left:414px;top:596px" width="20" height="8"><path d="M0 4H15.500" stroke="#555" stroke-width="1"/><path d="M19.500 .5L15.500 4l4 3.500z" fill="#f0f0f0"/><path d="M19 .7L15.500 4l3.500 3.300" stroke="#555" fill="none" stroke-width=".9"/></svg>
<svg class="ic" style="left:414px;top:719px" width="20" height="8"><path d="M0 4H15.500" stroke="#555" stroke-width="1"/><path d="M19.500 .5L15.500 4l4 3.500z" fill="#f0f0f0"/><path d="M19 .7L15.500 4l3.500 3.300" stroke="#555" fill="none" stroke-width=".9"/></svg>
<svg class="ic" style="left:414px;top:846px" width="20" height="8"><path d="M0 4H15.500" stroke="#555" stroke-width="1"/><path d="M19.500 .5L15.500 4l4 3.500z" fill="#f0f0f0"/><path d="M19 .7L15.500 4l3.500 3.300" stroke="#555" fill="none" stroke-width=".9"/></svg>
<div class="a" style="left:433px;top:82px;width:6px;height:892px;background:#f0f0f0;border-right:1px solid #a0a0a0"></div>
<div class="a" style="left:440px;top:82px;width:1478px;height:19px;background:#fafafa;border-bottom:1px solid #a0a0a0;border-top:1px solid #a0a0a0"></div>
<svg class="ic" style="left:440px;top:82px" width="160" height="19"><path d="M0 18.500L22 0.500H154.500q2 0 2 2V18.500" fill="#fff" stroke="#a0a0a0"/><path d="M0 19h157" stroke="#fff" stroke-width="1.5"/></svg>
<div class="a" style="left:463px;top:84px;font-size:11.2px;font-weight:bold;line-height:14px;white-space:nowrap">Оборудование.dwg*</div>
<svg class="ic" style="left:582px;top:86px" width="10" height="10"><path d="M1 1l8 8M9 1l-8 8" stroke="#000" stroke-width="1.6"/></svg>
<svg class="ic" style="left:1902px;top:88px" width="10" height="6"><path d="M0 0h10L5 5.500z" fill="#000"/></svg>
<div class="a" style="left:440px;top:950px;width:1478px;height:24px;background:#f0f0f0;border-bottom:1px solid #a0a0a0"></div>
<svg class="ic" style="left:443px;top:954px" width="16" height="14" viewBox="0 0 16 14" ><rect x=".5" y=".5" width="15" height="13" fill="#fff" stroke="#8a9ab0"/><path d="M1 3.500h14" stroke="#4a78c0" stroke-width="2"/><path d="M1 7.500h14M1 10.500h14" stroke="#a8b8c8"/></svg>
<div class="a" style="left:478px;top:952px;width:56px;height:19px;border-bottom:2px solid #222;border-right:1px solid #222;text-align:center;line-height:18px;font-size:11.2px">Модель</div>
<div class="a" style="left:541px;top:954px;font-size:11.2px;color:#8a8a8a;line-height:14px">Work</div>
<div class="a" style="left:575px;top:955px;width:1px;height:12px;background:#8a8a8a"></div>
<div class="a" style="left:0;top:975px;width:1918px;height:22px;background:#f5f5f5"></div>
<div class="a" style="left:4px;top:977px;width:77px;height:20px;border:1px solid #a8a8a8;border-bottom:none;background:#f4f4f4"></div>
<div class="a" style="left:9px;top:980px;font-size:11.2px;color:#7a7a7a;line-height:14px">Команда:</div>
<div class="a" style="left:0;top:1019px;width:1918px;height:4px;background:#101418"></div>
<div class="sb">
<div class="sep" style="left:212px;top:1001px;height:14px"></div>
<div class="sbon" style="left:289px;width:72px"></div>
<div class="sbon" style="left:360px;width:75px"></div>
<div class="sbon" style="left:507px;width:38px"></div>
<div class="sbon" style="left:545px;width:70px"></div>
<div class="sbon" style="left:649px;width:75px"></div>
<span style="left:218px;letter-spacing:-0.479px">ШАГ</span>
<span style="left:251px;letter-spacing:-1.475px">СЕТКА</span>
<span style="left:292.5px;letter-spacing:-0.724px">оПРИВЯЗКА</span>
<span style="left:364px;letter-spacing:-0.972px">ОТС-ОБЪЕКТ</span>
<span style="left:439px;letter-spacing:-0.802px">ОТС-ПОЛЯР</span>
<span style="left:511px;letter-spacing:-0.891px">ОРТО</span>
<span style="left:549px;letter-spacing:-0.018px">ДИН-ВВОД</span>
<span style="left:622.5px;letter-spacing:-1.385px">ВЕС</span>
<span style="left:652.5px;letter-spacing:-0.809px">ШТРИХОВКА</span>
<span style="left:1247px;letter-spacing:-0.471px">МОДЕЛЬ</span>
<span style="left:1519.5px;letter-spacing:-0.309px">*m2:1</span>
<span style="left:1775px;letter-spacing:0.223px">3D-режим</span>
<span style="left:1854px;letter-spacing:0.098px">Показ узлов</span>
<span style="left:4px;letter-spacing:-0.37px">12065.61,-2316.79,0.00</span>
<div class="sep" style="left:725px;top:1001px;height:14px"></div>
</div>
<svg class="ic" style="left:1297px;top:1000px" width="16" height="16" viewBox="0 0 16 16" ><rect x="7" y="4" width="7" height="6" rx="1" fill="#b4b4b4" stroke="#6a6a6a" stroke-width=".8"/><path d="M8.5 4v-2a2 2 0 0 1 4 0v2" stroke="#6a6a6a" fill="none" stroke-width="1.200"/><rect x="1" y="9" width="7" height="6" rx="1" fill="#b4b4b4" stroke="#6a6a6a" stroke-width=".8"/><path d="M2.5 9v-2a2 2 0 0 1 4 0v2" stroke="#6a6a6a" fill="none" stroke-width="1.200"/></svg>
<svg class="ic" style="left:1316px;top:1000px" width="16" height="16" viewBox="0 0 16 16" ><rect x="1.500" y="1.500" width="13" height="11" fill="#e8e8e8" stroke="#8a8a8a"/><path d="M2 12.500h12" stroke="#6a6a6a"/><path d="M8 11h7l-3.500 3.500z" fill="#222"/></svg>
<svg class="ic" style="left:1417px;top:1005px" width="10" height="6"><path d="M0 0h10L5 6z" fill="#333"/></svg>
<svg class="ic" style="left:1429px;top:1000px" width="16" height="16" viewBox="0 0 16 16" ><rect x=".5" y=".5" width="14" height="14" fill="#eaf4fc" stroke="#1a7ad4" stroke-dasharray="2 1"/><path d="M3.500 6a2.700 2.700 0 1 1 5 1.500v2.500h-3V8z" stroke="#1a7ad4" fill="#cfe6fa"/><path d="M10 6.500l4.500 6-2 .3.800 2.200-1.300.5-.8-2.200-1.500 1.300z" fill="#fff" stroke="#222" stroke-width=".7"/></svg>
<svg class="ic" style="left:1450px;top:1000px" width="16" height="16" viewBox="0 0 16 16" ><circle cx="8" cy="6" r="5" fill="#b8b8b8" stroke="#8a8a8a"/><circle cx="6.500" cy="4.500" r="2" fill="#d8d8d8"/><rect x="5.500" y="10.500" width="5" height="4" fill="#8a8a8a"/></svg>
<div class="a" style="left:1467px;top:998px;width:21px;height:20px;background:#d8ecfa"></div>
<svg class="ic" style="left:1470px;top:1000px" width="16" height="16" viewBox="0 0 16 16" ><circle cx="8" cy="8" r="7" fill="none" stroke="#d22" stroke-width="1.400"/><path d="M3 3l10 10" stroke="#d22" stroke-width="1.400"/><path d="M6.500 2.500l5 7-2 .3.900 2.600-1.400.5-.9-2.600-1.600 1.400z" fill="#fff" stroke="#222" stroke-width=".7"/></svg>
<svg class="ic" style="left:1581px;top:1000px" width="16" height="16" viewBox="0 0 16 16" ><path d="M4.500 15.500L2 9.500l1.200-1 1.800 2V3.500q1-1.200 2 0V2.500q1-1.200 2 0v1q1-1.200 2 0v1.500q1-1.200 2 0V11l-1.500 4.500z" fill="#fff" stroke="#333" stroke-width=".9"/><path d="M7 3.500v5M9 3.500v5M11 5v4" stroke="#888" stroke-width=".6"/></svg>
<svg class="ic" style="left:1604px;top:1000px" width="16" height="16" viewBox="0 0 16 16" ><circle cx="6.500" cy="6.500" r="5.300" fill="#d4ecfc" stroke="#6a7a8a" stroke-width="1.300"/><path d="M3.500 5a3.500 3.500 0 0 1 4-1.500" stroke="#fff" fill="none" stroke-width="1.200"/><path d="M10.500 10.500l4.500 4.500" stroke="#2a5fb0" stroke-width="2.200"/></svg>
<svg class="ic" style="left:1626px;top:1000px" width="16" height="16" viewBox="0 0 16 16" ><rect x=".6" y=".6" width="14.800" height="14.800" fill="none" stroke="#c01818" stroke-width="1.200"/><circle cx="6.500" cy="6.500" r="5.300" fill="#d4ecfc" stroke="#6a7a8a" stroke-width="1.300"/><path d="M3.500 5a3.500 3.500 0 0 1 4-1.500" stroke="#fff" fill="none" stroke-width="1.200"/><path d="M10.500 10.500l4.500 4.500" stroke="#2a5fb0" stroke-width="2.200"/></svg>
<svg class="ic" style="left:1648px;top:1000px" width="16" height="16" viewBox="0 0 16 16" ><circle cx="6.500" cy="6.500" r="5.300" fill="#d4ecfc" stroke="#6a7a8a" stroke-width="1.300"/><path d="M3.500 5a3.500 3.500 0 0 1 4-1.500" stroke="#fff" fill="none" stroke-width="1.200"/><rect x="3.500" y="3.700" width="6" height="5.500" fill="#fff" stroke="#444"/><path d="M3.500 5h6" stroke="#444" stroke-width="1.300"/><path d="M10.500 10.500l4.500 4.500" stroke="#2a5fb0" stroke-width="2.200"/></svg>
<svg class="ic" style="left:1670px;top:1000px" width="16" height="16" viewBox="0 0 16 16" ><ellipse cx="8" cy="9.500" rx="7" ry="3.200" fill="none" stroke="#7a7a7a" stroke-width="1.100"/><path d="M8 1.500v13M6 4l2-2.500L10 4M12 11.500l2.500.5-.5-2.500" stroke="#7a7a7a" fill="none" stroke-width="1.100"/></svg>
<svg class="ic" style="left:1692px;top:1000px" width="16" height="16" viewBox="0 0 16 16" ><path d="M2.500 7a5.500 5.500 0 0 1 9.500-2l1.500-1.500V8h-4.500l1.600-1.600a3.300 3.300 0 0 0-5.700.6zM13.500 9a5.500 5.500 0 0 1-9.500 2L2.500 12.500V8H7L5.400 9.600a3.300 3.300 0 0 0 5.700-.6z" fill="#3cba3c" stroke="#1a8a1a" stroke-width=".5"/></svg>
<svg class="ic" style="left:1713px;top:1000px" width="16" height="16" viewBox="0 0 16 16" ><rect x="1.500" y="8" width="9" height="7" rx="1" fill="#9a9a9a" stroke="#333" stroke-width="1.100"/><path d="M6 10v3" stroke="#11a" stroke-width="1.500"/><path d="M8 8V4.500a3 3 0 0 1 6 0V7" stroke="#333" fill="none" stroke-width="1.600"/></svg>
<svg class="ic" style="left:1734px;top:1000px" width="16" height="16" viewBox="0 0 16 16" ><path d="M1 4V1.500h3M12 1.500h3V4M15 12v2.500h-3M4 14.500H1V12" stroke="#333" fill="none" stroke-width="1.100"/><rect x="3" y="3.500" width="10" height="9" fill="#3aa0e8" stroke="#1a5aa8" stroke-width="1.300"/></svg>
<svg class="ic" style="left:1756px;top:1002px" width="14" height="14" viewBox="0 0 14 14" ><path d="M1.500 5.500l3-3h8v7l-3 3h-8z" fill="#f4c45a" stroke="#222"/><path d="M1.500 5.500h8v7M9.500 5.500l3-3" stroke="#222" fill="none"/></svg>
<svg class="ic" style="left:1834px;top:1001px" width="14" height="14" viewBox="0 0 14 14" ><circle cx="7" cy="7" r="5.500" fill="#2cc82c" stroke="#157a15"/><circle cx="5.500" cy="5.500" r="2.200" fill="#7ae87a"/></svg><svg class="a" style="left:440px;top:101px" width="1477" height="850" viewBox="440 101 1477 850">
<defs>
<radialGradient id="dg0" gradientUnits="userSpaceOnUse" cx="1790" cy="425.0" r="85"><stop offset="0" stop-color="#5f8242"/><stop offset=".35" stop-color="#4a6a33"/><stop offset=".75" stop-color="#36502a"/><stop offset="1" stop-color="#2c4220"/></radialGradient>
<radialGradient id="dg1" gradientUnits="userSpaceOnUse" cx="1623" cy="509.5" r="85"><stop offset="0" stop-color="#5f8242"/><stop offset=".35" stop-color="#4a6a33"/><stop offset=".75" stop-color="#36502a"/><stop offset="1" stop-color="#2c4220"/></radialGradient>
<radialGradient id="dg2" gradientUnits="userSpaceOnUse" cx="1456" cy="594.0" r="85"><stop offset="0" stop-color="#5f8242"/><stop offset=".35" stop-color="#4a6a33"/><stop offset=".75" stop-color="#36502a"/><stop offset="1" stop-color="#2c4220"/></radialGradient>
<radialGradient id="dg3" gradientUnits="userSpaceOnUse" cx="1289" cy="678.5" r="85"><stop offset="0" stop-color="#5f8242"/><stop offset=".35" stop-color="#4a6a33"/><stop offset=".75" stop-color="#36502a"/><stop offset="1" stop-color="#2c4220"/></radialGradient>
<pattern id="rail" width="4" height="8" patternUnits="userSpaceOnUse"><rect width="4" height="8" fill="#c4a68e"/><rect width="1.900" height="8" fill="#1a1af4"/><rect x=".65" width=".6" height="8" fill="#8a80e0"/></pattern>
<pattern id="railp" width="4.4" height="8" patternUnits="userSpaceOnUse"><rect width="4.4" height="8" fill="#c0a488"/><rect width="2" height="8" fill="#1a1af4"/><rect x=".7" width=".6" height="8" fill="#8a80e0"/></pattern>
<pattern id="railb" width="3.2" height="8" patternUnits="userSpaceOnUse"><rect width="3.2" height="8" fill="#0000dc"/><rect width="1.2" height="8" fill="#1818f8"/></pattern>
<pattern id="stair" width="8" height="3.6" patternUnits="userSpaceOnUse" patternTransform="rotate(36)"><rect width="8" height="3.6" fill="#dca400"/><rect y="2.5" width="8" height="1.1" fill="#ffd030"/></pattern>
<pattern id="stairB" width="8" height="3.6" patternUnits="userSpaceOnUse" patternTransform="rotate(-27)"><rect width="8" height="3.6" fill="#dca400"/><rect y="2.5" width="8" height="1.1" fill="#ffd030"/></pattern>
<pattern id="chk" width="4" height="4" patternUnits="userSpaceOnUse"><rect width="4" height="4" fill="#f4f8ee"/><rect width="2" height="2" fill="#2f4a20"/><rect x="2" y="2" width="2" height="2" fill="#2f4a20"/></pattern>
<linearGradient id="vg" x1="0" x2="1" y1="0" y2="0"><stop offset="0" stop-color="#4f6c34"/><stop offset=".12" stop-color="#486430"/><stop offset=".5" stop-color="#3d5528"/><stop offset=".8" stop-color="#33481f"/><stop offset="1" stop-color="#263618"/></linearGradient>
<linearGradient id="vg2" x1="0" x2="1" y1="0" y2="0"><stop offset="0" stop-color="#6d8e4a"/><stop offset=".3" stop-color="#5a7a3a"/><stop offset="1" stop-color="#3a5226"/></linearGradient>
<radialGradient id="vd" cx=".3" cy=".62" r=".8"><stop offset="0" stop-color="#c4dcaa"/><stop offset=".15" stop-color="#94b876"/><stop offset=".4" stop-color="#678845"/><stop offset=".7" stop-color="#4f6e33"/><stop offset="1" stop-color="#3a5226"/></radialGradient>
<radialGradient id="chh" gradientUnits="userSpaceOnUse" cx="775" cy="400" r="40"><stop offset="0" stop-color="#fff" stop-opacity=".8"/><stop offset=".4" stop-color="#fff" stop-opacity=".45"/><stop offset="1" stop-color="#fff" stop-opacity="0"/></radialGradient>
<radialGradient id="chh2"><stop offset="0" stop-color="#fff" stop-opacity="1"/><stop offset=".55" stop-color="#fff" stop-opacity=".9"/><stop offset="1" stop-color="#fff" stop-opacity="0"/></radialGradient>
</defs>
<rect x="440" y="101" width="1478" height="850" fill="#fff"/>
<polygon points="440,234 696.5,101 1505.5,101 1858.5,442 1918,499.5 1918,659.7 1351.7,951 852.6,951 440,540.2" fill="#bfa85e" />
<polygon points="440,234 696.5,101 706,101 440,238" fill="#cbb672" />
<path d="M440 234.3L696.5 101.3" stroke="#ead484" stroke-width="1" />
<polygon points="440,237.2 706,101 717,101 440,241.8" fill="#4e3f18" />
<polygon points="440,540.2 852.6,951 860,951 440,532.5" fill="#9c8840" />
<path d="M440 532.2L860.4 951" stroke="#f2de84" stroke-width="1.1" />
<path d="M440 524.6L868 951" stroke="#ecd67c" stroke-width="1" />
<polygon points="1351.7,951 1918,659.7 1918,654.7 1342,951" fill="#5a4818" />
<path d="M1340.5 951L1918 654" stroke="#ecd68a" stroke-width="1.2" />
<path d="M1330 951L1918 648.5" stroke="#e2cb80" stroke-width="1" />
<polygon points="1858.5,442 1918,499.5 1918,506 1851,441.5" fill="#c6af68" />
<path d="M1851 441.7L1918 506.5" stroke="#f0dc80" stroke-width="1.1" />
<path d="M1849 442.3L1918 509" stroke="#9c8840" stroke-width="2.2" />
<!--OBJ-->
<polygon points="1386.5,98 1386.5,142 1405.5,132 1405.5,122" fill="#35491f" /><polygon points="1379,98 1386.5,105 1386.5,142 1379,136" fill="#5f8040" /><path d="M1386 105L1386 142" stroke="#8fb56f" stroke-width="1" /><polygon points="1386.5,142 1405.5,132 1443.5,169 1399.5,192 1386.5,180" fill="#000058" /><polygon points="1379,136 1386.5,142 1386.5,180 1379,173" fill="#0a0acc" />
<polygon points="1674.5,393.5 1674.5,428.4 1693.5,418.4 1693.5,408.4" fill="#35491f" /><polygon points="1667,393.5 1674.5,400.5 1674.5,428.4 1667,422.4" fill="#5f8040" /><path d="M1674 400.5L1674 428.4" stroke="#8fb56f" stroke-width="1" /><polygon points="1674.5,428.4 1693.5,418.4 1731.5,455.4 1687.5,478.4 1674.5,466.4" fill="#000058" /><polygon points="1667,422.4 1674.5,428.4 1674.5,466.4 1667,459.4" fill="#0a0acc" />
<polygon points="1220,188 1220,227 1239,217 1239,207" fill="#35491f" /><polygon points="1212.5,188 1220,195 1220,227 1212.5,221" fill="#5f8040" /><path d="M1219.5 195L1219.5 227" stroke="#8fb56f" stroke-width="1" /><polygon points="1220,227 1239,217 1277,254 1233,277 1220,265" fill="#000058" /><polygon points="1212.5,221 1220,227 1220,265 1212.5,258" fill="#0a0acc" />
<polygon points="1508,481.5 1508,514.8 1527,504.8 1527,494.8" fill="#35491f" /><polygon points="1500.5,481.5 1508,488.5 1508,514.8 1500.5,508.8" fill="#5f8040" /><path d="M1507.5 488.5L1507.5 514.8" stroke="#8fb56f" stroke-width="1" /><polygon points="1508,514.8 1527,504.8 1565,541.8 1521,564.8 1508,552.8" fill="#000058" /><polygon points="1500.5,508.8 1508,514.8 1508,552.8 1500.5,545.8" fill="#0a0acc" />
<polygon points="1342.5,572 1342.5,604 1361.5,594 1361.5,584" fill="#35491f" /><polygon points="1335,572 1342.5,579 1342.5,604 1335,598" fill="#5f8040" /><path d="M1342 579L1342 604" stroke="#8fb56f" stroke-width="1" /><polygon points="1342.5,604 1361.5,594 1399.5,631 1355.5,654 1342.5,642" fill="#000058" /><polygon points="1335,598 1342.5,604 1342.5,642 1335,635" fill="#0a0acc" />
<path d="M957 188A65.3 42 -47.5 0 1 1049 94Z" fill="#5c7d3d"/>
<clipPath id="t1c"><path d="M957 188A65.3 33 -47.5 0 1 1049 94L1513 558L1421 652Z"/></clipPath>
<g clip-path="url(#t1c)"><polygon points="901.3,132.3 906.8,126.7 1426.5,646.4 1421,652" fill="#3d5a29" stroke="#3d5a29" stroke-width=".6"/><polygon points="906.8,126.7 913.9,119.4 1433.6,639.1 1426.5,646.4" fill="#4a6932" stroke="#4a6932" stroke-width=".6"/><polygon points="913.9,119.4 923.1,110 1442.8,629.7 1433.6,639.1" fill="#577839" stroke="#577839" stroke-width=".6"/><polygon points="923.1,110 934.9,98 1454.6,617.7 1442.8,629.7" fill="#678845" stroke="#678845" stroke-width=".6"/><polygon points="934.9,98 959.3,73.1 1479,592.8 1454.6,617.7" fill="#94b876" stroke="#94b876" stroke-width=".6"/><polygon points="959.3,73.1 972.7,59.4 1492.4,579.1 1479,592.8" fill="#678845" stroke="#678845" stroke-width=".6"/><polygon points="972.7,59.4 981,50.9 1500.7,570.6 1492.4,579.1" fill="#577839" stroke="#577839" stroke-width=".6"/><polygon points="981,50.9 987.8,44 1507.5,563.6 1500.7,570.6" fill="#4a6932" stroke="#4a6932" stroke-width=".6"/><polygon points="987.8,44 993.3,38.3 1513,558 1507.5,563.6" fill="#3f5c2a" stroke="#3f5c2a" stroke-width=".6"/></g>
<path d="M957 188A65.3 33 -47.5 0 1 1049 94" fill="none" stroke="#86ad66" stroke-width="1"/>
<ellipse cx="962" cy="122" rx="3.500" ry="3" fill="#7da35d"/>
<ellipse cx="973" cy="111" rx="3.500" ry="3" fill="#7da35d"/>
<polygon points="1099.4,77.7 1110.7,78 1593.4,560.7 1588,566.3" fill="#3d5a29" stroke="#3d5a29" stroke-width=".6"/><polygon points="1110.7,78 1125.1,78.4 1600.3,553.5 1593.4,560.7" fill="#4a6932" stroke="#4a6932" stroke-width=".6"/><polygon points="1125.1,78.4 1143.9,78.8 1609.3,544.2 1600.3,553.5" fill="#577839" stroke="#577839" stroke-width=".6"/><polygon points="1143.9,78.8 1167.9,79.4 1620.8,532.2 1609.3,544.2" fill="#678845" stroke="#678845" stroke-width=".6"/><polygon points="1167.9,79.4 1217.7,80.7 1644.7,507.5 1620.8,532.2" fill="#94b876" stroke="#94b876" stroke-width=".6"/><polygon points="1217.7,80.7 1245.1,81.4 1657.8,493.9 1644.7,507.5" fill="#678845" stroke="#678845" stroke-width=".6"/><polygon points="1245.1,81.4 1261.9,81.8 1665.9,485.5 1657.8,493.9" fill="#577839" stroke="#577839" stroke-width=".6"/><polygon points="1261.9,81.8 1275.8,82.1 1672.6,478.6 1665.9,485.5" fill="#4a6932" stroke="#4a6932" stroke-width=".6"/><polygon points="1275.8,82.1 1287.1,82.4 1678,473 1672.6,478.6" fill="#3f5c2a" stroke="#3f5c2a" stroke-width=".6"/>
<polygon points="1356.6,82 1367.9,82.3 1760.4,474.7 1755,480.4" fill="#3d5a29" stroke="#3d5a29" stroke-width=".6"/><polygon points="1367.9,82.3 1382.4,82.7 1767.3,467.3 1760.4,474.7" fill="#4a6932" stroke="#4a6932" stroke-width=".6"/><polygon points="1382.4,82.7 1401.3,83.2 1776.3,457.8 1767.3,467.3" fill="#577839" stroke="#577839" stroke-width=".6"/><polygon points="1401.3,83.2 1425.4,83.8 1787.8,445.6 1776.3,457.8" fill="#678845" stroke="#678845" stroke-width=".6"/><polygon points="1425.4,83.8 1475.2,85 1811.7,420.3 1787.8,445.6" fill="#94b876" stroke="#94b876" stroke-width=".6"/><polygon points="1475.2,85 1502.7,85.7 1824.8,406.4 1811.7,420.3" fill="#678845" stroke="#678845" stroke-width=".6"/><polygon points="1502.7,85.7 1519.7,86.2 1832.9,397.8 1824.8,406.4" fill="#577839" stroke="#577839" stroke-width=".6"/><polygon points="1519.7,86.2 1533.6,86.5 1839.6,390.7 1832.9,397.8" fill="#4a6932" stroke="#4a6932" stroke-width=".6"/><polygon points="1533.6,86.5 1544.9,86.8 1845,385 1839.6,390.7" fill="#3f5c2a" stroke="#3f5c2a" stroke-width=".6"/>
<path d="M1757 481A65.3 56 -47.5 0 0 1845 385A65.3 29 -47.5 0 0 1757 481Z" fill="url(#dg0)"/><path d="M1771 429Q1778 411 1794 402L1801 408Q1786 417 1780 432Z" fill="#e4f2d2" opacity=".9"/><path d="M1777 422Q1783 412 1793 406L1797 410Q1787 416 1783 425Z" fill="#fff"/><path d="M1845 385A65.3 29 -47.5 0 0 1757 481" fill="none" stroke="#9cc27c" stroke-width="1"/><path d="M1812 394Q1832 420 1826 460" fill="none" stroke="#86ad66" stroke-width=".8"/><ellipse cx="1826" cy="481.5" rx="13.5" ry="13" fill="#6f9350" transform="rotate(-35 1826 481.5)"/><ellipse cx="1827" cy="482.5" rx="10.5" ry="10" fill="#8fb56f" transform="rotate(-35 1826 481.5)"/><ellipse cx="1828" cy="483.5" rx="7.500" ry="7" fill="#24381a" transform="rotate(-35 1826 481.5)"/><path d="M1827 483.5l3-2v4z" fill="#3f3"/>
<path d="M1590 565.5A65.3 57 -47.5 0 0 1678 469.5A65.3 29 -47.5 0 0 1590 565.5Z" fill="url(#dg1)"/><path d="M1604 513.5Q1611 495.5 1627 486.5L1634 492.5Q1619 501.5 1613 516.5Z" fill="#e4f2d2" opacity=".9"/><path d="M1610 506.5Q1616 496.5 1626 490.5L1630 494.5Q1620 500.5 1616 509.5Z" fill="#fff"/><path d="M1678 469.5A65.3 29 -47.5 0 0 1590 565.5" fill="none" stroke="#9cc27c" stroke-width="1"/><path d="M1645 478.5Q1665 504.5 1659 544.5" fill="none" stroke="#86ad66" stroke-width=".8"/><ellipse cx="1659" cy="566" rx="13.5" ry="13" fill="#6f9350" transform="rotate(-35 1659 566)"/><ellipse cx="1660" cy="567" rx="10.5" ry="10" fill="#8fb56f" transform="rotate(-35 1659 566)"/><ellipse cx="1661" cy="568" rx="7.500" ry="7" fill="#24381a" transform="rotate(-35 1659 566)"/><path d="M1660 568l3-2v4z" fill="#3f3"/>
<path d="M1425 650A65.3 60 -47.5 0 0 1513 554A65.3 29 -47.5 0 0 1425 650Z" fill="url(#dg2)"/><path d="M1439 598Q1446 580 1462 571L1469 577Q1454 586 1448 601Z" fill="#e4f2d2" opacity=".9"/><path d="M1445 591Q1451 581 1461 575L1465 579Q1455 585 1451 594Z" fill="#fff"/><path d="M1513 554A65.3 29 -47.5 0 0 1425 650" fill="none" stroke="#9cc27c" stroke-width="1"/><path d="M1480 563Q1500 589 1494 629" fill="none" stroke="#86ad66" stroke-width=".8"/><ellipse cx="1494" cy="650.5" rx="13.5" ry="13" fill="#6f9350" transform="rotate(-35 1494 650.5)"/><ellipse cx="1495" cy="651.5" rx="10.5" ry="10" fill="#8fb56f" transform="rotate(-35 1494 650.5)"/><ellipse cx="1496" cy="652.5" rx="7.500" ry="7" fill="#24381a" transform="rotate(-35 1494 650.5)"/><path d="M1495 652.5l3-2v4z" fill="#3f3"/>
<ellipse cx="1724.5" cy="308.5" rx="3.6" ry="3" fill="#4c6b32"/><ellipse cx="1724" cy="305.5" rx="6" ry="4.8" fill="#7da35d" stroke="#a4c984" stroke-width=".7"/><path d="M1722 304.5l4-1.5v3z" fill="#3f3"/>
<ellipse cx="1791.4" cy="373" rx="7" ry="5.5" fill="#4c6b32"/><ellipse cx="1790.4" cy="368" rx="10" ry="8" fill="#7da35d" stroke="#a4c984" stroke-width=".8"/><ellipse cx="1790.4" cy="367" rx="7" ry="5.5" fill="#6b8f4b" stroke="#9cc27c" stroke-width=".6"/><path d="M1788.4 367l4-1.5v3z" fill="#3f3"/>
<ellipse cx="1556.5" cy="393.7" rx="3.6" ry="3" fill="#4c6b32"/><ellipse cx="1556" cy="390.7" rx="6" ry="4.8" fill="#7da35d" stroke="#a4c984" stroke-width=".7"/><path d="M1554 389.7l4-1.5v3z" fill="#3f3"/>
<ellipse cx="1623.8" cy="458" rx="7" ry="5.5" fill="#4c6b32"/><ellipse cx="1622.8" cy="453" rx="10" ry="8" fill="#7da35d" stroke="#a4c984" stroke-width=".8"/><ellipse cx="1622.8" cy="452" rx="7" ry="5.5" fill="#6b8f4b" stroke="#9cc27c" stroke-width=".6"/><path d="M1620.8 452l4-1.5v3z" fill="#3f3"/>
<ellipse cx="1390.5" cy="478.5" rx="3.6" ry="3" fill="#4c6b32"/><ellipse cx="1390" cy="475.5" rx="6" ry="4.8" fill="#7da35d" stroke="#a4c984" stroke-width=".7"/><path d="M1388 474.5l4-1.5v3z" fill="#3f3"/>
<ellipse cx="1456.7" cy="541.4" rx="7" ry="5.5" fill="#4c6b32"/><ellipse cx="1455.7" cy="536.4" rx="10" ry="8" fill="#7da35d" stroke="#a4c984" stroke-width=".8"/><ellipse cx="1455.7" cy="535.4" rx="7" ry="5.5" fill="#6b8f4b" stroke="#9cc27c" stroke-width=".6"/><path d="M1453.7 535.4l4-1.5v3z" fill="#3f3"/>
<ellipse cx="1273.5" cy="111" rx="3.6" ry="3" fill="#4c6b32"/><ellipse cx="1273" cy="108" rx="6" ry="4.8" fill="#7da35d" stroke="#a4c984" stroke-width=".7"/><path d="M1271 107l4-1.5v3z" fill="#3f3"/>
<ellipse cx="1284.5" cy="122" rx="3.6" ry="3" fill="#4c6b32"/><ellipse cx="1284" cy="119" rx="6" ry="4.8" fill="#7da35d" stroke="#a4c984" stroke-width=".7"/><path d="M1282 118l4-1.5v3z" fill="#3f3"/>
<ellipse cx="1106.5" cy="196.8" rx="3.6" ry="3" fill="#4c6b32"/><ellipse cx="1106" cy="193.8" rx="6" ry="4.8" fill="#7da35d" stroke="#a4c984" stroke-width=".7"/><path d="M1104 192.8l4-1.5v3z" fill="#3f3"/>
<ellipse cx="1118" cy="206.8" rx="3.6" ry="3" fill="#4c6b32"/><ellipse cx="1117.5" cy="203.8" rx="6" ry="4.8" fill="#7da35d" stroke="#a4c984" stroke-width=".7"/><path d="M1115.5 202.8l4-1.5v3z" fill="#3f3"/>
<ellipse cx="1027" cy="115" rx="7.7" ry="6.1" fill="#4c6b32"/><ellipse cx="1026" cy="110" rx="11" ry="8.8" fill="#7da35d" stroke="#a4c984" stroke-width=".8"/><ellipse cx="1026" cy="109" rx="7.7" ry="6.1" fill="#6b8f4b" stroke="#9cc27c" stroke-width=".6"/><path d="M1024 109l4-1.5v3z" fill="#3f3"/>
<ellipse cx="1305" cy="141" rx="16" ry="13.1" fill="#56783a"/><ellipse cx="1304" cy="137" rx="16" ry="13.1" fill="#76a054" stroke="#94bb74" stroke-width=".8"/><ellipse cx="1304" cy="137" rx="12.5" ry="9.9" fill="none" stroke="#93b973" stroke-width="2" stroke-dasharray="1.500 2.500"/><path d="M1298 138q2-8 9-7M1306 142q3-5 7-4" stroke="#9cc27c" fill="none" stroke-width="1"/>
<ellipse cx="1138.5" cy="227" rx="17" ry="13.9" fill="#56783a"/><ellipse cx="1137.5" cy="223" rx="17" ry="13.9" fill="#76a054" stroke="#94bb74" stroke-width=".8"/><ellipse cx="1137.5" cy="223" rx="13.3" ry="10.5" fill="none" stroke="#93b973" stroke-width="2" stroke-dasharray="1.500 2.500"/><path d="M1131.5 224q2-8 9-7M1139.5 228q3-5 7-4" stroke="#9cc27c" fill="none" stroke-width="1"/>
<path d="M1040 128l5-2v3zM1051 138l5-2v3z" fill="#3f3"/><path d="M1040 127v6M1051 137v6" stroke="#3c5a28"/>
<polygon points="717.2,263 901.6,169 901.6,194 717.2,288" fill="url(#railp)" />
<path d="M717.2 263L901.6 169" stroke="#1010f0" stroke-width="1.6" />
<path d="M717.2 263L717.2 288" stroke="#1010f0" stroke-width="1.4" />
<path d="M901.6 169L901.6 194" stroke="#1010f0" stroke-width="1.4" />
<polygon points="919.8,159.7 956,141.2 956,166.2 919.8,184.7" fill="url(#railp)" />
<path d="M919.8 159.7L956 141.2" stroke="#1010f0" stroke-width="1.6" />
<path d="M919.8 159.7L919.8 184.7" stroke="#1010f0" stroke-width="1.4" />
<path d="M956 141.2L956 166.2" stroke="#1010f0" stroke-width="1.4" />
<polygon points="717.2,287.5 958,165.2 960,191.2 735.2,303.6 717.2,289" fill="url(#railb)" />
<polygon points="735.2,299 960,186.2 960,191.2 735.2,303.6" fill="#0000b8" />
<polygon points="903,183 919,175 919,190 903,198" fill="#dca400" />
<path d="M902 192L919.5 161" stroke="#ffb400" stroke-width="1.5" />
<path d="M919.5 161L919.5 184" stroke="#ffb400" stroke-width="1.5" />
<path d="M911 176L911 192" stroke="#ffb400" stroke-width="1.2" />
<polygon points="1050,101 1126,101 1128,104 1084,128" fill="#0000e6" />
<polygon points="1056,101 1070,101 1072,112 1060,106" fill="url(#railp)" />
<rect x="736" y="304" width="3" height="62" fill="#ffb400"/><rect x="738" y="304" width="1" height="62" fill="#b87c00"/>
<rect x="900" y="222" width="2" height="40" fill="#ffb400"/><rect x="901" y="222" width="1" height="40" fill="#b87c00"/>
<polygon points="715,289 737,304 713,351 691,338" fill="url(#stair)" /><path d="M715 289L691 338" stroke="#ffc000" stroke-width="1.2" /><path d="M737 304L713 351" stroke="#ffc000" stroke-width="1.6" /><path d="M715 279L691 328" stroke="#ffb400" stroke-width="1.4" /><path d="M737 294L713 341" stroke="#ffb400" stroke-width="1.4" /><path d="M691 328L691 338" stroke="#ffb400" stroke-width="1.2" /><path d="M713 341L713 351" stroke="#ffb400" stroke-width="1.2" /><path d="M715 279L715 289" stroke="#ffb400" stroke-width="1.2" /><path d="M737 294L737 304" stroke="#ffb400" stroke-width="1.2" />
<polygon points="786,270 804,260.5 823,322 802,330" fill="url(#stairB)" /><path d="M786 270L802 330" stroke="#ffc000" stroke-width="1.2" /><path d="M804 260.5L823 322" stroke="#ffc000" stroke-width="1.6" /><path d="M786 256L802 316" stroke="#ffb400" stroke-width="1.4" /><path d="M804 246.5L823 308" stroke="#ffb400" stroke-width="1.4" /><path d="M802 316L802 330" stroke="#ffb400" stroke-width="1.2" /><path d="M823 308L823 322" stroke="#ffb400" stroke-width="1.2" /><path d="M786 256L786 270" stroke="#ffb400" stroke-width="1.2" /><path d="M804 246.5L804 260.5" stroke="#ffb400" stroke-width="1.2" />
<polygon points="883,221 900,211.5 920,280 901,289" fill="url(#stairB)" /><path d="M883 221L901 289" stroke="#ffc000" stroke-width="1.2" /><path d="M900 211.5L920 280" stroke="#ffc000" stroke-width="1.6" /><path d="M883 207L901 275" stroke="#ffb400" stroke-width="1.4" /><path d="M900 197.5L920 266" stroke="#ffb400" stroke-width="1.4" /><path d="M901 275L901 289" stroke="#ffb400" stroke-width="1.2" /><path d="M920 266L920 280" stroke="#ffb400" stroke-width="1.2" /><path d="M883 207L883 221" stroke="#ffb400" stroke-width="1.2" /><path d="M900 197.5L900 211.5" stroke="#ffb400" stroke-width="1.2" />
<rect x="569" y="222" width="5.5" height="30" fill="#0000d8"/><rect x="572.3" y="222" width="2.2" height="30" fill="#000090"/>
<rect x="585" y="222" width="5" height="28" fill="#0000d8"/><rect x="588" y="222" width="2" height="28" fill="#000090"/>
<rect x="577.5" y="226" width="5.5" height="34" fill="#0000d8"/><rect x="580.8" y="226" width="2.2" height="34" fill="#000090"/>
<rect x="567.5" y="150" width="23.5" height="73" fill="url(#vg)"/>
<ellipse cx="579.2" cy="223" rx="11.7" ry="4" fill="#34481f"/>
<ellipse cx="579.2" cy="151" rx="11.7" ry="9" fill="url(#vd)"/>
<path d="M568 152a11.700 5 0 0 0 23 0" fill="none" stroke="#a4c984" stroke-width=".8"/>
<rect x="576" y="140" width="6" height="5" fill="#5f8040"/><ellipse cx="579" cy="140" rx="5" ry="3" fill="#7da35d" stroke="#a4c984" stroke-width=".6"/><circle cx="579" cy="139.500" r="1.300" fill="#3f3"/>
<ellipse cx="569" cy="181" rx="3" ry="3.500" fill="#7da35d" stroke="#a4c984" stroke-width=".5"/>
<ellipse cx="569" cy="211" rx="3" ry="3.500" fill="#7da35d" stroke="#a4c984" stroke-width=".5"/>
<ellipse cx="591" cy="203" rx="3" ry="3.500" fill="#7da35d" stroke="#a4c984" stroke-width=".5"/>
<ellipse cx="590" cy="216" rx="3" ry="3.500" fill="#7da35d" stroke="#a4c984" stroke-width=".5"/>
<rect x="587" y="196" width="7" height="5" fill="#5f8040"/>
<path d="M586 229L598 231.5" stroke="#9ab" stroke-width="1.5" />
<circle cx="600" cy="232" r="1.500" fill="#3f3"/>
<rect x="624" y="204" width="22.5" height="40" fill="url(#vg2)"/>
<ellipse cx="635.2" cy="205" rx="11.2" ry="9" fill="url(#vd)"/>
<path d="M624 206a11.200 5 0 0 0 22.500 0" fill="none" stroke="#a4c984" stroke-width=".8"/>
<rect x="632.5" y="193" width="5" height="5" fill="#5f8040"/><ellipse cx="635" cy="193" rx="4.500" ry="2.700" fill="#7da35d" stroke="#a4c984" stroke-width=".6"/><circle cx="635" cy="192.500" r="1.200" fill="#3f3"/>
<rect x="544.5" y="356" width="3" height="102" fill="#ffb400"/><rect x="546.5" y="356" width="1" height="102" fill="#b87c00"/>
<rect x="625" y="370" width="2.5" height="56" fill="#ffb400"/><rect x="626.5" y="370" width="1" height="56" fill="#b87c00"/>
<rect x="616" y="388" width="8" height="38" fill="#0000d8"/><rect x="620.8" y="388" width="3.2" height="38" fill="#000090"/>
<rect x="672.5" y="396" width="10" height="28" fill="#0000d8"/><rect x="678.5" y="396" width="4" height="28" fill="#000090"/>
<rect x="651" y="400" width="5" height="22" fill="#5f8040"/>
<rect x="650" y="421" width="9" height="35" fill="#0000d8"/><rect x="655.4" y="421" width="3.6" height="35" fill="#000090"/>
<path d="M612.9 262V388a38.200 14 0 0 0 76.400 0V262z" fill="url(#vg)"/>
<path d="M612.9 388a38.200 14 0 0 0 76.400 0" fill="none" stroke="#7da35d" stroke-width=".8"/>
<path d="M612.9 264C612.900 240 630 227 651 227S689.300 240 689.300 264A38.200 15 0 0 1 612.900 264z" fill="url(#vd)"/>
<path d="M651 266L614 258M651 266L618 272M651 266L630 278M651 266L646 280M651 266L662 279M651 266L676 274" stroke="#7da35d" stroke-width=".5" opacity=".6" fill="none"/>
<path d="M612.9 264a38.200 15 0 0 0 76.400 0" fill="none" stroke="#a4c984" stroke-width=".9"/>
<path d="M662 240q22 14 20 34" fill="none" stroke="#86ad66" stroke-width=".7"/>
<rect x="645" y="232" width="12" height="11" fill="#4f6e33"/><ellipse cx="651" cy="243" rx="6" ry="2.500" fill="#4f6e33"/>
<ellipse cx="651" cy="234" rx="11.500" ry="7.500" fill="#6f9350"/><ellipse cx="651" cy="232" rx="11.500" ry="7.500" fill="#8fb56f" stroke="#b2d592" stroke-width=".7"/><ellipse cx="651" cy="232" rx="7.500" ry="4.800" fill="#7da35d" stroke="#b2d592" stroke-width=".6"/><circle cx="651" cy="231" r="1.300" fill="#3f3"/>
<ellipse cx="614.5" cy="321" rx="7" ry="10.500" fill="#7da35d" stroke="#a4c984" stroke-width=".8" transform="rotate(-25 614.500 321)"/><ellipse cx="615.5" cy="321.5" rx="4" ry="6.500" fill="#4c6b32" transform="rotate(-25 615.500 321.500)"/>
<ellipse cx="678" cy="351" rx="10.500" ry="10" fill="#7da35d" stroke="#a4c984" stroke-width=".8"/><ellipse cx="679" cy="352" rx="7" ry="6.500" fill="#30481f" stroke="#a4c984" stroke-width=".6"/><circle cx="680" cy="352.500" r="1.300" fill="#3f3"/>
<ellipse cx="668" cy="392" rx="3.500" ry="3" fill="#7da35d"/><ellipse cx="681" cy="386" rx="3" ry="3" fill="#7da35d"/>
<path d="M676 397L683 399" stroke="#9ab" stroke-width="1.2" />
<rect x="583" y="390" width="3" height="106" fill="#ffb400"/><rect x="585" y="390" width="1" height="106" fill="#b87c00"/>
<rect x="589.5" y="390" width="2" height="43.5" fill="#ffb400"/><rect x="590.5" y="390" width="1" height="43.5" fill="#b87c00"/>
<polygon points="544,332.5 589.3,310 589.3,329.5 544,352" fill="url(#rail)" /><path d="M544 332.5L589.3 310" stroke="#1010f0" stroke-width="1.3" /><path d="M544 352L589.3 329.5" stroke="#1010f0" stroke-width="1" /><polygon points="589.3,310 629.3,348 629.3,367.5 589.3,329.5" fill="url(#rail)" /><path d="M589.3 310L629.3 348" stroke="#1010f0" stroke-width="1.3" /><path d="M589.3 329.5L629.3 367.5" stroke="#1010f0" stroke-width="1" /><polygon points="544,352 589.3,329.5 629.3,367.5 583,388" fill="#0000e6" /><polygon points="544,352 583,388 583,390.5 544,354.5" fill="#0000c0" /><polygon points="583,388 629.3,367.5 629.3,370 583,390.5" fill="#0000d0" /><polygon points="544,332.5 583,368.5 583,388 544,352" fill="url(#railb)" /><polygon points="583,368.5 629.3,348 629.3,367.5 583,388" fill="url(#railb)" /><path d="M544 332.5L583 368.5" stroke="#2020ff" stroke-width="1.2" /><path d="M583 368.5L629.3 348" stroke="#2020ff" stroke-width="1.2" /><path d="M544 332.5L544 352" stroke="#1010f0" stroke-width="1.4" /><path d="M589.3 310L589.3 329.5" stroke="#1010f0" stroke-width="1.4" /><path d="M629.3 348L629.3 367.5" stroke="#1010f0" stroke-width="1.4" /><path d="M583 368.5L583 388" stroke="#1010f0" stroke-width="1.4" />
<polygon points="541,350 558,353 489,505 469,489" fill="url(#stair)" /><path d="M541 350L469 489" stroke="#ffc000" stroke-width="1.2" /><path d="M558 353L489 505" stroke="#ffc000" stroke-width="1.6" /><path d="M541 334L469 473" stroke="#ffb400" stroke-width="1.4" /><path d="M558 337L489 489" stroke="#ffb400" stroke-width="1.4" /><path d="M469 473L469 489" stroke="#ffb400" stroke-width="1.2" /><path d="M489 489L489 505" stroke="#ffb400" stroke-width="1.2" /><path d="M541 334L541 350" stroke="#ffb400" stroke-width="1.2" /><path d="M558 337L558 353" stroke="#ffb400" stroke-width="1.2" />
<rect x="583" y="474" width="3" height="24" fill="#ffb400"/><rect x="585" y="474" width="1" height="24" fill="#b87c00"/>
<polygon points="584,451 629,429 629,449 584,471" fill="url(#rail)" /><path d="M584 451L629 429" stroke="#1010f0" stroke-width="1.3" /><path d="M584 471L629 449" stroke="#1010f0" stroke-width="1" /><polygon points="629,429 671,472 671,492 629,449" fill="url(#rail)" /><path d="M629 429L671 472" stroke="#1010f0" stroke-width="1.3" /><path d="M629 449L671 492" stroke="#1010f0" stroke-width="1" /><polygon points="584,471 629,449 671,492 631,513" fill="#0000e6" /><polygon points="584,471 631,513 631,517 584,475" fill="#0000c0" /><polygon points="631,513 671,492 671,496 631,517" fill="#0000d0" /><polygon points="584,451 631,493 631,513 584,471" fill="url(#railb)" /><polygon points="631,493 671,472 671,492 631,513" fill="url(#railb)" /><path d="M584 451L631 493" stroke="#2020ff" stroke-width="1.2" /><path d="M631 493L671 472" stroke="#2020ff" stroke-width="1.2" /><path d="M584 451L584 471" stroke="#1010f0" stroke-width="1.4" /><path d="M629 429L629 449" stroke="#1010f0" stroke-width="1.4" /><path d="M671 472L671 492" stroke="#1010f0" stroke-width="1.4" /><path d="M631 493L631 513" stroke="#1010f0" stroke-width="1.4" />
<rect x="631" y="517" width="2.5" height="26.5" fill="#ffb400"/><rect x="632.5" y="517" width="1" height="26.5" fill="#b87c00"/>
<polygon points="612,498 631,506 614,552 596,534" fill="url(#stair)" /><path d="M612 498L596 534" stroke="#ffc000" stroke-width="1.2" /><path d="M631 506L614 552" stroke="#ffc000" stroke-width="1.6" /><path d="M612 485L596 521" stroke="#ffb400" stroke-width="1.4" /><path d="M631 493L614 539" stroke="#ffb400" stroke-width="1.4" /><path d="M596 521L596 534" stroke="#ffb400" stroke-width="1.2" /><path d="M614 539L614 552" stroke="#ffb400" stroke-width="1.2" /><path d="M612 485L612 498" stroke="#ffb400" stroke-width="1.2" /><path d="M631 493L631 506" stroke="#ffb400" stroke-width="1.2" />
<rect x="675.5" y="526" width="3" height="62" fill="#ffb400"/><rect x="677.5" y="526" width="1" height="62" fill="#b87c00"/>
<rect x="714" y="522" width="3" height="61" fill="#ffb400"/><rect x="716" y="522" width="1" height="61" fill="#b87c00"/>
<rect x="719" y="522" width="3" height="61" fill="#ffb400"/><rect x="721" y="522" width="1" height="61" fill="#b87c00"/>
<rect x="757.5" y="501" width="3" height="57" fill="#ffb400"/><rect x="759.5" y="501" width="1" height="57" fill="#b87c00"/>
<polygon points="677,463.5 722.5,442 722.5,460 677,481.5" fill="url(#rail)" /><path d="M677 463.5L722.5 442" stroke="#1010f0" stroke-width="1.3" /><path d="M677 481.5L722.5 460" stroke="#1010f0" stroke-width="1" /><polygon points="722.5,442 761,483.5 761,501.5 722.5,460" fill="url(#rail)" /><path d="M722.5 442L761 483.5" stroke="#1010f0" stroke-width="1.3" /><path d="M722.5 460L761 501.5" stroke="#1010f0" stroke-width="1" /><polygon points="677,481.5 722.5,460 761,501.5 715.5,523" fill="#0000e6" /><polygon points="677,481.5 715.5,523 715.5,525 677,483.5" fill="#0000c0" /><polygon points="715.5,523 761,501.5 761,503.5 715.5,525" fill="#0000d0" /><polygon points="677,463.5 715.5,505 715.5,523 677,481.5" fill="url(#railb)" /><polygon points="715.5,505 761,483.5 761,501.5 715.5,523" fill="url(#railb)" /><path d="M677 463.5L715.5 505" stroke="#2020ff" stroke-width="1.2" /><path d="M715.5 505L761 483.5" stroke="#2020ff" stroke-width="1.2" /><path d="M677 463.5L677 481.5" stroke="#1010f0" stroke-width="1.4" /><path d="M722.5 442L722.5 460" stroke="#1010f0" stroke-width="1.4" /><path d="M761 483.5L761 501.5" stroke="#1010f0" stroke-width="1.4" /><path d="M715.5 505L715.5 523" stroke="#1010f0" stroke-width="1.4" />
<polygon points="667,482 690,490 622,640 602,621" fill="url(#stair)" /><path d="M667 482L602 621" stroke="#ffc000" stroke-width="1.2" /><path d="M690 490L622 640" stroke="#ffc000" stroke-width="1.6" /><path d="M667 466L602 605" stroke="#ffb400" stroke-width="1.4" /><path d="M690 474L622 624" stroke="#ffb400" stroke-width="1.4" /><path d="M602 605L602 621" stroke="#ffb400" stroke-width="1.2" /><path d="M622 624L622 640" stroke="#ffb400" stroke-width="1.2" /><path d="M667 466L667 482" stroke="#ffb400" stroke-width="1.2" /><path d="M690 474L690 490" stroke="#ffb400" stroke-width="1.2" />
<path d="M755 363.5L795 336" stroke="#ffb400" stroke-width="1.4" />
<path d="M762 372L806 340" stroke="#ffb400" stroke-width="1.4" />
<polygon points="800,348 812,342 816,350 804,356" fill="#ffb400" />
<polygon points="774,344.5 795,358.5 795,374.5 774,360.5" fill="url(#rail)" /><path d="M774 344.5L795 358.5" stroke="#1010f0" stroke-width="1.3" /><path d="M774 360.5L795 374.5" stroke="#1010f0" stroke-width="1" />
<polygon points="800,330 928,455 928,481 800,356" fill="url(#rail)" />
<path d="M800 330L928 455" stroke="#1010f0" stroke-width="1.4" />
<polygon points="790,346 928,481 928,523.5 858.7,454 824.5,469 790,445" fill="#0000e6" />
<polygon points="824.5,443 858.7,429.5 858.7,454 824.5,469" fill="url(#railb)" />
<polygon points="858.7,448 928,517.5 928,523.5 858.7,454" fill="#0000b8" />
<rect x="827" y="469" width="3" height="36" fill="#ffb400"/><rect x="829" y="469" width="1" height="36" fill="#b87c00"/>
<rect x="855" y="455.5" width="3" height="35.5" fill="#ffb400"/><rect x="857" y="455.5" width="1" height="35.5" fill="#b87c00"/>
<rect x="749" y="523" width="7" height="35" fill="#0000d8"/><rect x="753.2" y="523" width="2.8" height="35" fill="#000090"/>
<rect x="805" y="528" width="10" height="28" fill="#0000d8"/><rect x="811" y="528" width="4" height="28" fill="#000090"/>
<rect x="784" y="540" width="6" height="17" fill="url(#chk)"/>
<rect x="781" y="556" width="9" height="30" fill="#0000d8"/><rect x="786.4" y="556" width="3.6" height="30" fill="#000090"/>
<path d="M745 392C745 368 762 358.500 783 358.500S821 368 821 392V512C821 528 804 537 783 537S745 528 745 512z" fill="url(#chk)"/>
<path d="M745 392C745 368 762 358.500 783 358.500S821 368 821 392V512C821 528 804 537 783 537S745 528 745 512z" fill="url(#chh)"/>
<ellipse cx="774" cy="400" rx="21" ry="9.500" fill="url(#chh2)" transform="rotate(8 774 400)"/>
<polygon points="746,485.3 761,501.5 761,503.5 746,512" fill="url(#railb)" />
<polygon points="746,467.3 761,483.5 761,501.5 746,485.3" fill="url(#rail)" /><path d="M746 467.3L761 483.5" stroke="#1010f0" stroke-width="1.3" /><path d="M746 485.3L761 501.5" stroke="#1010f0" stroke-width="1" />
<ellipse cx="747" cy="452" rx="5" ry="8" fill="#e8f2e0" opacity=".8"/><ellipse cx="809" cy="484" rx="7" ry="8" fill="#e8f2e0" opacity=".7"/><ellipse cx="786" cy="369" rx="10" ry="5" fill="#fff" opacity=".7"/>
<rect x="779" y="526" width="8.500" height="9" fill="#1e90ff"/><path d="M777.5 516l10-10v10z" fill="#1e90ff"/><path d="M780 540l9-3v5z" fill="#1e90ff"/>
<circle cx="812" cy="528" r="1.500" fill="#3f3"/><circle cx="800" cy="470" r="1.200" fill="#3f3"/>
<rect x="715.5" y="601" width="3" height="28" fill="#ffb400"/><rect x="717.5" y="601" width="1" height="28" fill="#b87c00"/>
<rect x="719" y="601" width="2" height="28" fill="#ffb400"/><rect x="720" y="601" width="1" height="28" fill="#b87c00"/>
<polygon points="716,583 761.5,560.7 761.5,578.7 716,601" fill="url(#rail)" /><path d="M716 583L761.5 560.7" stroke="#1010f0" stroke-width="1.3" /><path d="M716 601L761.5 578.7" stroke="#1010f0" stroke-width="1" /><polygon points="761.5,560.7 811,608 811,626 761.5,578.7" fill="url(#rail)" /><path d="M761.5 560.7L811 608" stroke="#1010f0" stroke-width="1.3" /><path d="M761.5 578.7L811 626" stroke="#1010f0" stroke-width="1" /><polygon points="716,601 761.5,578.7 811,626 765.5,648.3" fill="#0000e6" /><polygon points="716,601 765.5,648.3 765.5,650.3 716,603" fill="#0000c0" /><polygon points="765.5,648.3 811,626 811,628 765.5,650.3" fill="#0000d0" /><polygon points="716,583 765.5,630.3 765.5,648.3 716,601" fill="url(#railb)" /><polygon points="765.5,630.3 811,608 811,626 765.5,648.3" fill="url(#railb)" /><path d="M716 583L765.5 630.3" stroke="#2020ff" stroke-width="1.2" /><path d="M765.5 630.3L811 608" stroke="#2020ff" stroke-width="1.2" /><path d="M716 583L716 601" stroke="#1010f0" stroke-width="1.4" /><path d="M761.5 560.7L761.5 578.7" stroke="#1010f0" stroke-width="1.4" /><path d="M811 608L811 626" stroke="#1010f0" stroke-width="1.4" /><path d="M765.5 630.3L765.5 648.3" stroke="#1010f0" stroke-width="1.4" />
<polygon points="766,626 811,612 811,640 766,652" fill="#0000d8" />
<polygon points="742,622 760,636 748,680 730,665" fill="url(#stair)" /><path d="M742 622L730 665" stroke="#ffc000" stroke-width="1.2" /><path d="M760 636L748 680" stroke="#ffc000" stroke-width="1.6" /><path d="M742 609L730 652" stroke="#ffb400" stroke-width="1.4" /><path d="M760 623L748 667" stroke="#ffb400" stroke-width="1.4" /><path d="M730 652L730 665" stroke="#ffb400" stroke-width="1.2" /><path d="M748 667L748 680" stroke="#ffb400" stroke-width="1.2" /><path d="M742 609L742 622" stroke="#ffb400" stroke-width="1.2" /><path d="M760 623L760 636" stroke="#ffb400" stroke-width="1.2" />
<polygon points="690,687 832.5,614.5 850,632 709,705 690,712" fill="url(#railp)" />
<path d="M690 687L832.5 614.5" stroke="#1010f0" stroke-width="1.4" />
<polygon points="709,705 850,632 850,658 710,730 690,712" fill="url(#railb)" />
<polygon points="709,725 850,653 850,658 710,730" fill="#0000b8" />
<path d="M709 705L850 632" stroke="#2020ff" stroke-width="1.2" />
<rect x="708" y="729" width="3" height="26" fill="#ffb400"/><rect x="710" y="729" width="1" height="26" fill="#b87c00"/>
<rect x="848" y="658" width="2.5" height="25" fill="#ffb400"/><rect x="849.5" y="658" width="1" height="25" fill="#b87c00"/>
<polygon points="690,704 708,718 692,763 671,742" fill="url(#stair)" /><path d="M690 704L671 742" stroke="#ffc000" stroke-width="1.2" /><path d="M708 718L692 763" stroke="#ffc000" stroke-width="1.6" /><path d="M690 690L671 728" stroke="#ffb400" stroke-width="1.4" /><path d="M708 704L692 749" stroke="#ffb400" stroke-width="1.4" /><path d="M671 728L671 742" stroke="#ffb400" stroke-width="1.2" /><path d="M692 749L692 763" stroke="#ffb400" stroke-width="1.2" /><path d="M690 690L690 704" stroke="#ffb400" stroke-width="1.2" /><path d="M708 704L708 718" stroke="#ffb400" stroke-width="1.2" />
<polygon points="858,650 866,646 871,666 863,672" fill="url(#stair)" />
<path d="M836 616L850 622" stroke="#ffb400" stroke-width="1.2" />
<path d="M850 622L869 652" stroke="#ffb400" stroke-width="1.3" />
<path d="M869 652L869 668" stroke="#ffb400" stroke-width="1.3" />
<path d="M850 622L850 634" stroke="#ffb400" stroke-width="1.2" />
<polygon points="912,668 930,668 930,736 902,694 900,680" fill="#678845" />
<polygon points="916,668 930,668 930,700 910,676" fill="#94b876" />
<polygon points="905,686 930,716 930,700 910,676" fill="#7da35d" />
<polygon points="900,682 902,694 930,736 930,724 904,690" fill="#4a6932" />
<ellipse cx="911" cy="672" rx="10" ry="18" fill="#5f8242" stroke="#8fb56f" stroke-width="1" transform="rotate(42 911 672)"/>
<ellipse cx="913" cy="674" rx="8" ry="15.500" fill="#6f9350" stroke="#94b876" stroke-width=".8" transform="rotate(42 913 674)"/>
<ellipse cx="916" cy="677" rx="7" ry="14" fill="#86aa66" transform="rotate(42 916 677)"/>
<polygon points="908,690 922,668 930,672 930,700 916,700" fill="#86aa66" />
<polygon points="916,676 924,668 930,670 930,690" fill="#94b876" />
<polygon points="842.6,806 846.7,809 846.7,826.5 842.6,824.5" fill="#5f8040" />
<polygon points="846.7,806 862,816 859,820.4 846.7,826.5" fill="#35491f" />
<polygon points="846.7,826.5 856,806 899,848 896,881 847,906" fill="#000058" />
<polygon points="842.6,824.5 846.7,826.5 847,906 842.6,903" fill="#0a0acc" />
<clipPath id="t4c"><path d="M800.5 753.7A26 14 -53 0 1 829 713.600L850 712L1040 903L960 922Z"/></clipPath>
<g clip-path="url(#t4c)">
<polygon points="776.6,728.5 779.3,725.3 965.6,920.7 960,922" fill="#4a6932" stroke="#4a6932" stroke-width=".6"/>
<polygon points="779.3,725.3 783.6,720.4 974.4,918.6 965.6,920.7" fill="#577839" stroke="#577839" stroke-width=".6"/>
<polygon points="783.6,720.4 789.5,713.8 986.4,915.7 974.4,918.6" fill="#678845" stroke="#678845" stroke-width=".6"/>
<polygon points="789.5,713.8 797.3,704.9 1002.4,911.9 986.4,915.7" fill="#86aa66" stroke="#86aa66" stroke-width=".6"/>
<polygon points="797.3,704.9 807.1,693.7 1022.4,907.2 1002.4,911.9" fill="#94b876" stroke="#94b876" stroke-width=".6"/>
<polygon points="807.1,693.7 811.8,688.4 1032,904.9 1022.4,907.2" fill="#678845" stroke="#678845" stroke-width=".6"/>
<polygon points="811.8,688.4 814.6,685.3 1037.6,903.6 1032,904.9" fill="#5b7b3c" stroke="#5b7b3c" stroke-width=".6"/>
<polygon points="814.6,685.3 815.8,683.9 1040,903 1037.6,903.6" fill="#4a6932" stroke="#4a6932" stroke-width=".6"/>
</g>
<path d="M800.5 753.7A26 14 -53 0 1 829 713.600" fill="none" stroke="#9cc27c" stroke-width="1"/>
<polygon points="810.8,708.5 827,713.6 812,736 800,730" fill="#7da35d" />
<polygon points="812,712 822,716 812,730 804,726" fill="#94b876" />
<ellipse cx="803.5" cy="726" rx="8" ry="17" fill="#5f8242" stroke="#8fb56f" stroke-width="1" transform="rotate(38 803.500 726)"/>
<ellipse cx="806" cy="724.500" rx="7.500" ry="16" fill="#6f9350" stroke="#94b876" stroke-width=".8" transform="rotate(38 806 724.500)"/>
<polygon points="812,710 826,714 814,734 806,728" fill="#7da35d" />
<polygon points="814,712 822,715 813,728 808,724" fill="#94b876" />
<ellipse cx="857" cy="741" rx="13" ry="10.500" fill="#56783a"/><ellipse cx="856" cy="737" rx="13.500" ry="11" fill="#6f9350" stroke="#94b876" stroke-width=".8"/><ellipse cx="856" cy="737" rx="10.500" ry="8.500" fill="none" stroke="#8fb56f" stroke-width="1.500" stroke-dasharray="1.500 2.500"/>
<polygon points="954,916 1020,916 1004,950 968,950" fill="#86aa66" />
<polygon points="954,916 972,916 1000,950 966,950" fill="#5b7b3c" />
<polygon points="985,916 1012,916 1004,934 1000,950 992,950 996,934" fill="#94b876" />
<polygon points="964.4,923.6 968,926 968,947 964.4,946.4" fill="#5f8040" />
<polygon points="964.4,941.6 987,950 964.4,950" fill="#0a0acc" />
<path d="M1016 916H1040Q1058 922 1058 934T1049 950H1001Q1002 930 1016 916z" fill="#4a6a32"/>
<path d="M1040 916Q1058 922 1058 934T1049 950H1030Q1046 938 1040 916z" fill="#3a5426"/>
<path d="M1016 916Q1002 930 1001.5 950" fill="none" stroke="#9cc27c" stroke-width="1"/>
<path d="M1008 939q3-10 14-16l2 3q-9 6-11 15z" fill="#e4f2d2"/>
<polygon points="1066.3,916 1120.2,916 1120.2,950 1066.3,950" fill="#000058" />
<polygon points="1066.3,916 1071,916 1071,950 1066.3,950" fill="#0a0acc" />
<polygon points="1561,787 1573,780 1591,797 1583,814 1561,794" fill="url(#stairB)" /><polygon points="1605,796 1616,786 1625,792 1615,802" fill="url(#stairB)" /><polygon points="1573,752 1596,742 1596,772 1573,782" fill="url(#rail)" /><path d="M1573 752L1596 742" stroke="#1010f0" stroke-width="1.5" /><polygon points="1598,768 1615,760 1615,792 1598,798" fill="url(#rail)" /><path d="M1598 768L1615 760" stroke="#1010f0" stroke-width="1.5" /><polygon points="1575,778 1596,770 1615,786 1613,796 1591,800" fill="#0000e6" /><path d="M1591 770L1591 812" stroke="#ffb400" stroke-width="2" /><path d="M1613 782L1613 802" stroke="#c88600" stroke-width="1.5" /><path d="M1565 772L1572 756" stroke="#ffb400" stroke-width="2" /><path d="M1596 742L1603 748" stroke="#ffb400" stroke-width="1.5" /><path d="M1615 760L1621 766" stroke="#ffb400" stroke-width="1.5" /><path d="M1583 782L1591 768" stroke="#ffb400" stroke-width="2.5" />
<polygon points="1729,702.1 1740.8,695.2 1758.4,711.9 1750.6,728.6 1729,709" fill="url(#stairB)" /><polygon points="1772.1,710.9 1782.9,701.1 1791.7,707 1781.9,716.8" fill="url(#stairB)" /><polygon points="1740.8,667.8 1763.3,658 1763.3,687.4 1740.8,697.2" fill="url(#rail)" /><path d="M1740.8 667.8L1763.3 658" stroke="#1010f0" stroke-width="1.5" /><polygon points="1765.3,683.5 1781.9,675.6 1781.9,707 1765.3,712.9" fill="url(#rail)" /><path d="M1765.3 683.5L1781.9 675.6" stroke="#1010f0" stroke-width="1.5" /><polygon points="1742.7,693.3 1763.3,685.4 1781.9,701.1 1780,710.9 1758.4,714.8" fill="#0000e6" /><path d="M1758.4 685.4L1758.4 726.6" stroke="#ffb400" stroke-width="2" /><path d="M1780 697.2L1780 716.8" stroke="#c88600" stroke-width="1.5" /><path d="M1732.9 687.4L1739.8 671.7" stroke="#ffb400" stroke-width="2" /><path d="M1763.3 658L1770.2 663.9" stroke="#ffb400" stroke-width="1.5" /><path d="M1781.9 675.6L1787.8 681.5" stroke="#ffb400" stroke-width="1.5" /><path d="M1750.6 697.2L1758.4 683.5" stroke="#ffb400" stroke-width="2.5" />
<polygon points="1893,621.8 1904.4,615.1 1921.5,631.2 1913.9,647.4 1893,628.4" fill="url(#stairB)" /><polygon points="1934.8,630.3 1945.2,620.8 1953.8,626.5 1944.3,636" fill="url(#stairB)" /><polygon points="1904.4,588.5 1926.2,579 1926.2,607.5 1904.4,617" fill="url(#rail)" /><path d="M1904.4 588.5L1926.2 579" stroke="#1010f0" stroke-width="1.5" /><polygon points="1928.2,603.7 1944.3,596.1 1944.3,626.5 1928.2,632.2" fill="url(#rail)" /><path d="M1928.2 603.7L1944.3 596.1" stroke="#1010f0" stroke-width="1.5" /><polygon points="1906.3,613.2 1926.2,605.6 1944.3,620.8 1942.4,630.3 1921.5,634.1" fill="#0000e6" /><path d="M1921.5 605.6L1921.5 645.5" stroke="#ffb400" stroke-width="2" /><path d="M1942.4 617L1942.4 636" stroke="#c88600" stroke-width="1.5" /><path d="M1896.8 607.5L1903.5 592.3" stroke="#ffb400" stroke-width="2" /><path d="M1926.2 579L1932.9 584.7" stroke="#ffb400" stroke-width="1.5" /><path d="M1944.3 596.1L1950 601.8" stroke="#ffb400" stroke-width="1.5" /><path d="M1913.9 617L1921.5 603.7" stroke="#ffb400" stroke-width="2.5" />
</svg><div class="a" id="vpb" style="left:439px;top:101px;width:2px;height:850px;background:#fffbec"></div><div class="pp">
<div class="t"><b>Свойства</b></div>
<svg class="ic" style="left:412px;top:10px" width="10" height="10"><path d="M1 1l8 8M9 1l-8 8" stroke="#000" stroke-width="1.600"/></svg>
<svg class="ic" style="left:6px;top:29px" width="16" height="16" viewBox="0 0 16 16" ><rect x="1.500" y="1.500" width="13" height="13" stroke="#111" fill="none" stroke-dasharray="1 1" shape-rendering="crispEdges"/><rect x="4" y="4" width="8" height="8" fill="#cfe4f8"/><path d="M5 8h6M8 5v6" stroke="#0a2a8a" stroke-width="1.800"/><rect x="0" y="0" width="2.500" height="2.500" fill="#fff" stroke="#444" stroke-width=".5"/><rect x="13.500" y="13.500" width="2.500" height="2.500" fill="#fff" stroke="#444" stroke-width=".5"/></svg>
<div class="sel" style="left:24px;top:28px;width:21px;height:21px;background:#e4f0fa;border-color:#2a8ad4"></div>
<svg class="ic" style="left:27px;top:29px" width="16" height="16" viewBox="0 0 16 16" ><rect x="1.500" y="1.500" width="13" height="13" stroke="#111" fill="none" stroke-dasharray="1 1" shape-rendering="crispEdges"/><text x="3.800" y="13.500" font-size="14" font-weight="bold" font-family="Liberation Sans,sans-serif" fill="#1a5fb8">1</text></svg>
<div class="sep" style="left:48px;top:30px;height:18px"></div>
<svg class="ic" style="left:53px;top:29px" width="16" height="16" viewBox="0 0 16 16" ><rect x="1.500" y="1.500" width="13" height="12" stroke="#111" fill="#f4f8fc" stroke-dasharray="3 1.500" shape-rendering="crispEdges"/><path d="M8.500 5.500v9.500l2.300-2 1.500 3 1.400-.7-1.400-3 3-.3z" fill="#fff" stroke="#111" stroke-width=".8"/></svg>
<svg class="ic" style="left:73px;top:29px" width="16" height="16" viewBox="0 0 16 16" ><rect x="1.500" y="1.500" width="13" height="12" stroke="#111" fill="#f4f8fc" stroke-dasharray="3 1.500" shape-rendering="crispEdges"/><rect x="4.500" y="4.500" width="5" height="5" stroke="#111" fill="#f4f8fc" stroke-dasharray="3 1.500" shape-rendering="crispEdges"/><path d="M6 7h3" stroke="#111"/><path d="M8.500 5.500v9.500l2.300-2 1.500 3 1.400-.7-1.400-3 3-.3z" fill="#fff" stroke="#111" stroke-width=".8"/></svg>
<svg class="ic" style="left:94px;top:29px" width="16" height="16" viewBox="0 0 16 16" ><path d="M1 8l6.500-6.500v13zM9 1.500h6v13zM9 14.500l6-6" fill="#bfe8fa" stroke="#18a8d8" stroke-width="1.100"/><path d="M8.500 5.500v9.500l2.300-2 1.500 3 1.400-.7-1.400-3 3-.3z" fill="#fff" stroke="#111" stroke-width=".8"/></svg>
<svg class="ic" style="left:115px;top:29px" width="16" height="16" viewBox="0 0 16 16" ><path d="M1 2h10L7.500 7v6l-2.500-1.500V7z" fill="#2a7ad4" stroke="#0a3a8a" stroke-width=".8"/><path d="M13 5l-4.500 5.500h3L9 15.500l6.500-7h-3.500l2.500-3.500z" fill="#f4c81a" stroke="#b07800" stroke-width=".6"/></svg>
<div class="sep" style="left:136px;top:30px;height:18px"></div>
<svg class="ic" style="left:143px;top:29px" width="16" height="16" viewBox="0 0 16 16" ><rect x="2.500" y="7.500" width="9" height="8" fill="#e8e8e8" stroke="#cfcfcf"/><path d="M4 10h6M4 12.500h6M7 8v7" stroke="#d8d8d8"/><path d="M6 8q0-4.500 5-4.500V1.500L15.500 5 11 8.500v-2q-2.500 0-3 2z" fill="#dcdcdc" stroke="#c8c8c8"/></svg>
<svg class="ic" style="left:163px;top:29px" width="16" height="16" viewBox="0 0 16 16" ><rect x="3.500" y="8.500" width="10" height="7" fill="#e8e8e8" stroke="#cfcfcf"/><path d="M5 11h7M5 13h7M8.500 9v6" stroke="#d8d8d8"/><path d="M5 1.500q4.500 0 4.500 4h2.500L8.500 9.500 5 5.500h2.500q0-2-2.500-2z" fill="#dcdcdc" stroke="#c8c8c8"/></svg>
<div class="sep" style="left:184px;top:30px;height:18px"></div>
<svg class="ic" style="left:189px;top:29px" width="16" height="16" viewBox="0 0 16 16" ><rect x="1.500" y="1.500" width="13" height="12" stroke="#111" fill="#f4f8fc" stroke-dasharray="3 1.500" shape-rendering="crispEdges"/><rect x="3" y="3.500" width="9" height="3" fill="#d8ecfa" stroke="#1a7ad4" stroke-width="1.200"/><circle cx="5.500" cy="9.500" r="3" fill="#d8ecfa" stroke="#1a7ad4" stroke-width="1.400"/><path d="M8.500 5.500v9.500l2.300-2 1.500 3 1.400-.7-1.400-3 3-.3z" fill="#fff" stroke="#111" stroke-width=".8"/></svg>
<svg class="ic" style="left:210px;top:29px" width="16" height="16" viewBox="0 0 16 16" ><rect x="1.500" y="1.500" width="13" height="12" stroke="#111" fill="#f4f8fc" stroke-dasharray="3 1.500" shape-rendering="crispEdges"/><path d="M3.500 3.500l4 4M7.500 3.500l-4 4" stroke="#1a7ad4" stroke-width="1.100"/><path d="M8.500 5.500v9.500l2.300-2 1.500 3 1.400-.7-1.400-3 3-.3z" fill="#fff" stroke="#111" stroke-width=".8"/></svg>
<div class="sep" style="left:232px;top:30px;height:18px"></div>
<svg class="ic" style="left:238px;top:29px" width="16" height="16" viewBox="0 0 16 16" ><defs><radialGradient id="hq" cx=".4" cy=".3" r=".8"><stop offset="0" stop-color="#6ab0f4"/><stop offset="1" stop-color="#1a4fb0"/></radialGradient></defs><circle cx="8" cy="8" r="7.500" fill="url(#hq)" stroke="#1a4fa0" stroke-width=".8"/><path d="M5.500 6q0-2.500 2.500-2.500t2.500 2.200q0 1.500-2.500 2.500v1.600" stroke="#fff" fill="none" stroke-width="1.800"/><circle cx="8" cy="12.500" r="1.100" fill="#fff"/></svg>
<div class="pr" style="top:48px;height:22px"><i style="height:22px;line-height:20.5px">Имя рабочей плоскости</i><u style="height:22px;line-height:20.5px">WCS</u></div>
<div class="pr" style="top:70px;height:22px"><i style="height:22px;line-height:20.5px">Заблокировать нормаль</i><u style="height:22px;line-height:20.5px">Нет</u></div>
<div class="pr" style="top:92px;height:22px"><i style="height:22px;line-height:20.5px">Заблокировать XY</i><u style="height:22px;line-height:20.5px">Нет</u></div>
<div class="ph" style="top:114px;height:22px;line-height:22px">Параметры изделия</div>
<div class="pr" style="top:136px;height:21px"><i style="height:21px;line-height:19.5px">Наименование изделия</i><u style="height:21px;line-height:19.5px">Сепаратор газовый</u></div>
<div class="pr" style="top:157px;height:22px"><i style="height:22px;line-height:20.5px">Обозначение / Модель</i><u style="height:22px;line-height:20.5px">&nbsp;ГС-2-1,0-2000-2-н</u></div>
<div class="pr" style="top:179px;height:22px"><i style="height:22px;line-height:20.5px">Производитель</i><u style="height:22px;line-height:20.5px">&nbsp;НПО "Нефтемаш"</u></div>
<div class="pr" style="top:201px;height:22px"><i style="height:22px;line-height:20.5px">Нормативный документ</i><u style="height:22px;line-height:20.5px"></u></div>
<div class="pr" style="top:223px;height:22px"><i style="height:22px;line-height:20.5px">Ссылочный чертеж</i><u style="height:22px;line-height:20.5px"></u></div>
<div class="pr" style="top:245px;height:22px"><i style="height:22px;line-height:20.5px">Материал</i><u style="height:22px;line-height:20.5px">09Г2С-8</u></div>
<div class="pr" style="top:267px;height:22px"><i style="height:22px;line-height:20.5px">Материал (норматив)</i><u style="height:22px;line-height:20.5px"></u></div>
<div class="pr" style="top:289px;height:22px"><i style="height:22px;line-height:20.5px">Вес</i><u style="height:22px;line-height:20.5px"></u></div>
<div class="pr" style="top:311px;height:21px"><i style="height:21px;line-height:19.5px">Примечания</i><u style="height:21px;line-height:19.5px"></u></div>
<div class="ph" style="top:332px;height:21px;line-height:21px">Дополнительные параметры</div>
<div class="pr" style="top:353px;height:22px"><i style="height:22px;line-height:20.5px">Группа изделий</i><u style="height:22px;line-height:20.5px">Сепарационное оборудование</u></div>
<div class="pr" style="top:375px;height:21px"><i style="height:21px;line-height:19.5px">Тип изделий</i><u style="height:21px;line-height:19.5px"></u></div>
<div class="pr" style="top:396px;height:22px"><i style="height:22px;line-height:20.5px">Код ОКП</i><u style="height:22px;line-height:20.5px"></u></div>
<div class="pr" style="top:418px;height:22px"><i style="height:22px;line-height:20.5px">Вес нетто</i><u style="height:22px;line-height:20.5px"></u></div>
<div class="pr" style="top:440px;height:22px"><i style="height:22px;line-height:20.5px">Вес брутто</i><u style="height:22px;line-height:20.5px"></u></div>
<div class="ph" style="top:462px;height:21px;line-height:21px">Экспликация</div>
<div class="pr" style="top:483px;height:22px"><i style="height:22px;line-height:20.5px">Включить в экспликацю</i><u style="height:22px;line-height:20.5px"></u></div>
<div class="pr" style="top:505px;height:21px"><i style="height:21px;line-height:19.5px">Позиция по экспликации</i><u style="height:21px;line-height:19.5px"></u></div>
<div class="pr" style="top:526px;height:22px"><i style="height:22px;line-height:20.5px">Группа по экспликации</i><u style="height:22px;line-height:20.5px"></u></div>
<div class="pr" style="top:548px;height:22px"><i style="height:22px;line-height:20.5px">Примечания</i><u style="height:22px;line-height:20.5px"></u></div>
<div class="ph" style="top:570px;height:21px;line-height:21px">Спецификация</div>
<div class="pr" style="top:591px;height:22px"><i style="height:22px;line-height:20.5px">Включить в спецификацию</i><u style="height:22px;line-height:20.5px"></u></div>
<div class="pr" style="top:613px;height:22px"><i style="height:22px;line-height:20.5px">Позиция по спецификации</i><u style="height:22px;line-height:20.5px">3</u></div>
<div class="pr" style="top:635px;height:22px"><i style="height:22px;line-height:20.5px">Группа по спецификации</i><u style="height:22px;line-height:20.5px"></u></div>
<div class="pr" style="top:657px;height:6px"><i style="height:6px;line-height:4.5px"></i><u style="height:6px;line-height:4.5px"></u></div>
<div class="a" style="left:408px;top:49px;width:17px;height:617px;background:#f0f0f0"></div>
<div class="a" style="left:410px;top:316px;width:14px;height:320px;background:#cdcdcd"></div>
<svg class="ic" style="left:412px;top:54px" width="10" height="8"><path d="M1 6l4-4 4 4" stroke="#505050" fill="none" stroke-width="1.600"/></svg>
<svg class="ic" style="left:412px;top:652px" width="10" height="8"><path d="M1 2l4 4 4-4" stroke="#505050" fill="none" stroke-width="1.600"/></svg>
</div>
</body></html>
